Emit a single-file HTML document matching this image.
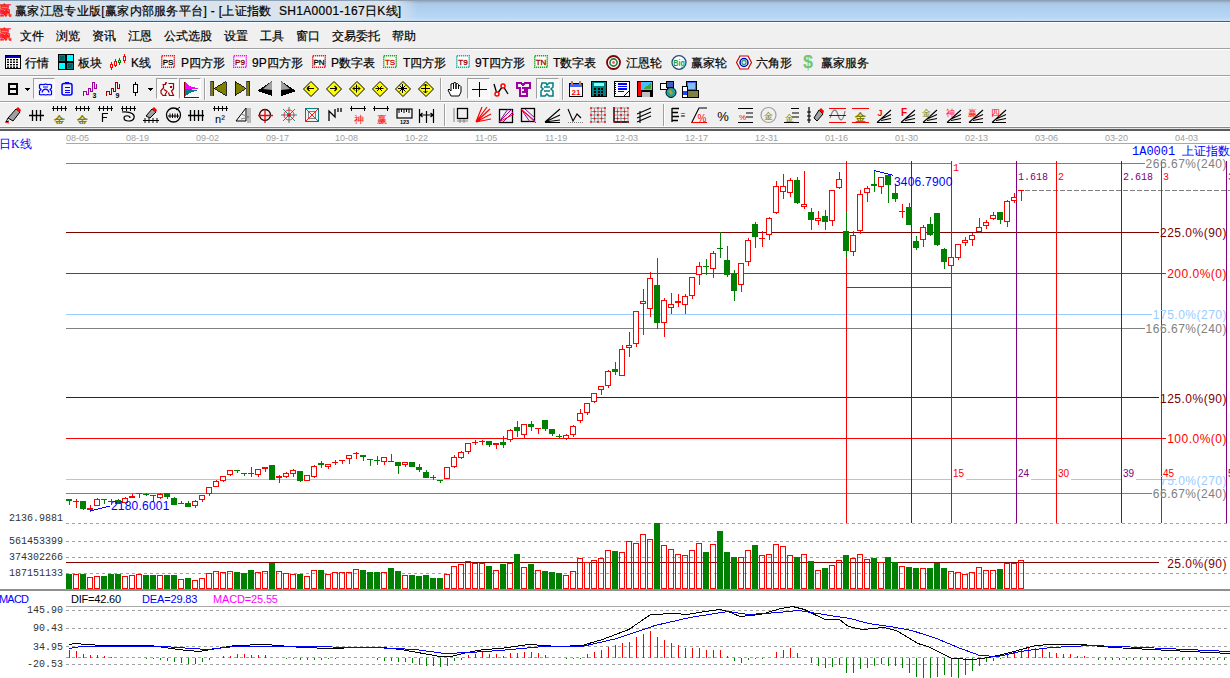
<!DOCTYPE html>
<html><head><meta charset="utf-8">
<style>
html,body{margin:0;padding:0;width:1230px;height:678px;overflow:hidden;background:#fff;font-family:"Liberation Sans",sans-serif;}
.abs{position:absolute;}
#title{left:0;top:0;width:1230px;height:21px;background:linear-gradient(to bottom,#8598ad 0px,#9fb6cf 2px,#abcaea 4px,#b0d1f1 10px,#b6d6f4 17px,#c4def6 20px);}
#titleglow{left:0;top:1px;width:418px;height:19px;background:linear-gradient(to right,rgba(220,228,235,0.97) 0,rgba(220,228,235,0.97) 94%,rgba(220,228,235,0) 100%);}
#titleline{left:0;top:21px;width:1230px;height:1px;background:#4e5c68;}
.ttl{font-size:12px;line-height:14px;color:#000;top:4px;white-space:nowrap;letter-spacing:0.32px;-webkit-text-stroke:0.2px #000;}
#menu{left:0;top:22px;width:1230px;height:26px;background:#f0f0f0;border-top:1px solid #fff;box-sizing:border-box;}
.mi{font-size:12px;line-height:14px;top:29px;color:#000;white-space:nowrap;-webkit-text-stroke:0.2px #000;}
.bar{left:0;width:1230px;background:#f0f0f0;}
.sep{background:#a0a0a0;height:1px;left:0;width:1230px;}
.sepw{background:#fff;height:1px;left:0;width:1230px;}
.tb{font-size:12px;color:#000;white-space:nowrap;-webkit-text-stroke:0.2px #000;}
.lbl{font-size:12px;letter-spacing:0.5px;white-space:nowrap;line-height:12px;}
.date{font-size:9px;color:#a0a0a0;top:132px;line-height:10px;}
.mono{font-family:"Liberation Mono",monospace;}
</style></head><body>
<div class="abs" id="title"></div>
<div class="abs" id="titleglow"></div>
<div class="abs" id="titleline"></div>
<div class="abs ttl" style="left:-2px;top:3px;color:#ff0000;font-size:14px;line-height:16px;font-family:'Liberation Serif',serif;-webkit-text-stroke:0.3px #f00">赢</div>
<div class="abs ttl" style="left:15px;">赢家江恩专业版[赢家内部服务平台] - [上证指数&nbsp; SH1A0001-167日K线]</div>

<div class="abs" id="menu"></div>
<div class="abs mi" style="left:-2px;top:27px;color:#ff0000;font-size:14px;line-height:16px;font-family:'Liberation Serif',serif;-webkit-text-stroke:0.3px #f00">赢</div>
<div class="abs mi" style="left:20px">文件</div>
<div class="abs mi" style="left:56px">浏览</div>
<div class="abs mi" style="left:92px">资讯</div>
<div class="abs mi" style="left:128px">江恩</div>
<div class="abs mi" style="left:164px">公式选股</div>
<div class="abs mi" style="left:224px">设置</div>
<div class="abs mi" style="left:260px">工具</div>
<div class="abs mi" style="left:296px">窗口</div>
<div class="abs mi" style="left:332px">交易委托</div>
<div class="abs mi" style="left:392px">帮助</div>

<div class="abs sep" style="top:48px"></div>
<div class="abs sepw" style="top:49px"></div>
<div class="abs bar" style="top:50px;height:25px"></div>
<div class="abs sep" style="top:75px"></div>
<div class="abs sepw" style="top:76px"></div>
<div class="abs bar" style="top:77px;height:24px"></div>
<div class="abs sep" style="top:101px"></div>
<div class="abs sepw" style="top:102px"></div>
<div class="abs bar" style="top:103px;height:24px"></div>
<div class="abs" style="left:0;top:126px;width:1230px;height:1px;background:#fafafa"></div>
<div class="abs" style="left:0;top:127px;width:1230px;height:1px;background:#858585"></div>
<div class="abs" style="left:0;top:128px;width:1230px;height:1px;background:#e4e4e4"></div>
<div class="abs" style="left:0;top:129px;width:1230px;height:2px;background:#5c5c5c"></div>

<svg class="abs" style="left:5px;top:55px" width="16" height="14" viewBox="0 0 16 14"><rect x="0.5" y="0.5" width="15" height="13" fill="#fff" stroke="#000"/><rect x="1" y="1" width="14" height="2" fill="#0000c0"/><rect x="2" y="4.0" width="2" height="1.4" fill="#000"/><rect x="5" y="4.0" width="2" height="1.4" fill="#000"/><rect x="8" y="4.0" width="2" height="1.4" fill="#000"/><rect x="11" y="4.0" width="2" height="1.4" fill="#000"/><rect x="2" y="6.5" width="2" height="1.4" fill="#000"/><rect x="5" y="6.5" width="2" height="1.4" fill="#000"/><rect x="8" y="6.5" width="2" height="1.4" fill="#000"/><rect x="11" y="6.5" width="2" height="1.4" fill="#000"/><rect x="2" y="9.0" width="2" height="1.4" fill="#000"/><rect x="5" y="9.0" width="2" height="1.4" fill="#000"/><rect x="8" y="9.0" width="2" height="1.4" fill="#000"/><rect x="11" y="9.0" width="2" height="1.4" fill="#000"/><rect x="2" y="11.5" width="2" height="1.4" fill="#000"/><rect x="5" y="11.5" width="2" height="1.4" fill="#000"/><rect x="8" y="11.5" width="2" height="1.4" fill="#000"/><rect x="11" y="11.5" width="2" height="1.4" fill="#000"/></svg>
<div class="abs tb" style="left:25px;top:55.5px;line-height:14px">行情</div>
<svg class="abs" style="left:58px;top:54px" width="16" height="16" viewBox="0 0 16 16"><rect x="0.5" y="0.5" width="7" height="7" fill="#008080" stroke="#000"/><rect x="8.5" y="0.5" width="7" height="7" fill="#00ffff" stroke="#000"/><rect x="0.5" y="8.5" width="7" height="7" fill="#00ffff" stroke="#000"/><rect x="8.5" y="8.5" width="7" height="7" fill="#008080" stroke="#000"/><rect x="2" y="2" width="4" height="4" fill="#006060"/><rect x="10" y="10" width="4" height="4" fill="#006060"/></svg>
<div class="abs tb" style="left:78px;top:55.5px;line-height:14px">板块</div>
<svg class="abs" style="left:110px;top:54px" width="17" height="16" viewBox="0 0 17 16"><g stroke-width="1"><line x1="1.5" y1="8" x2="1.5" y2="16" stroke="#f00"/><rect x="0.5" y="10.5" width="2" height="3" fill="#fff" stroke="#f00"/><line x1="5.5" y1="5" x2="5.5" y2="13" stroke="#f00"/><rect x="4.5" y="7.5" width="2" height="4" fill="#fff" stroke="#f00"/><line x1="9.5" y1="4" x2="9.5" y2="11" stroke="#080"/><rect x="8.5" y="6.5" width="2" height="2" fill="#fff" stroke="#080"/><line x1="14.5" y1="0" x2="14.5" y2="9" stroke="#f00"/><rect x="13.5" y="2.5" width="2" height="4" fill="#fff" stroke="#f00"/></g></svg>
<div class="abs tb" style="left:131px;top:55.5px;line-height:14px">K线</div>
<svg class="abs" style="left:161px;top:55px" width="14" height="13" viewBox="0 0 14 13"><rect x="0.75" y="0.75" width="12.5" height="11.5" fill="#fff" stroke="#ff0000" stroke-width="1.5" stroke-dasharray="1.2,0.8"/><text x="7" y="9.6" font-family="Liberation Sans" font-size="8" text-anchor="middle" fill="#000" stroke="#000" stroke-width="0.3">PS</text></svg>
<div class="abs tb" style="left:181px;top:55.5px;line-height:14px">P四方形</div>
<svg class="abs" style="left:233px;top:55px" width="14" height="13" viewBox="0 0 14 13"><rect x="0.75" y="0.75" width="12.5" height="11.5" fill="#fff" stroke="#ff00ff" stroke-width="1.5" stroke-dasharray="1.2,0.8"/><text x="7" y="9.6" font-family="Liberation Sans" font-size="8" text-anchor="middle" fill="#800000" stroke="#800000" stroke-width="0.3">P9</text></svg>
<div class="abs tb" style="left:252px;top:55.5px;line-height:14px">9P四方形</div>
<svg class="abs" style="left:312px;top:55px" width="14" height="13" viewBox="0 0 14 13"><rect x="0.75" y="0.75" width="12.5" height="11.5" fill="#fff" stroke="#ff0000" stroke-width="1.5" stroke-dasharray="1.2,0.8"/><text x="7" y="9.6" font-family="Liberation Sans" font-size="8" text-anchor="middle" fill="#000" stroke="#000" stroke-width="0.3">PN</text></svg>
<div class="abs tb" style="left:331px;top:55.5px;line-height:14px">P数字表</div>
<svg class="abs" style="left:383px;top:55px" width="14" height="13" viewBox="0 0 14 13"><rect x="0.75" y="0.75" width="12.5" height="11.5" fill="#fff" stroke="#00b000" stroke-width="1.5" stroke-dasharray="1.2,0.8"/><text x="7" y="9.6" font-family="Liberation Sans" font-size="8" text-anchor="middle" fill="#e00000" stroke="#e00000" stroke-width="0.3">TS</text></svg>
<div class="abs tb" style="left:403px;top:55.5px;line-height:14px">T四方形</div>
<svg class="abs" style="left:456px;top:55px" width="14" height="13" viewBox="0 0 14 13"><rect x="0.75" y="0.75" width="12.5" height="11.5" fill="#fff" stroke="#00b0b0" stroke-width="1.5" stroke-dasharray="1.2,0.8"/><text x="7" y="9.6" font-family="Liberation Sans" font-size="8" text-anchor="middle" fill="#a00000" stroke="#a00000" stroke-width="0.3">T9</text></svg>
<div class="abs tb" style="left:475px;top:55.5px;line-height:14px">9T四方形</div>
<svg class="abs" style="left:534px;top:55px" width="14" height="13" viewBox="0 0 14 13"><rect x="0.75" y="0.75" width="12.5" height="11.5" fill="#fff" stroke="#00b000" stroke-width="1.5" stroke-dasharray="1.2,0.8"/><text x="7" y="9.6" font-family="Liberation Sans" font-size="8" text-anchor="middle" fill="#a00000" stroke="#a00000" stroke-width="0.3">TN</text></svg>
<div class="abs tb" style="left:553px;top:55.5px;line-height:14px">T数字表</div>
<svg class="abs" style="left:606px;top:55px" width="15" height="15" viewBox="0 0 15 15"><circle cx="7.5" cy="7.5" r="6.5" fill="#fff" stroke="#800000" stroke-width="1.8"/><circle cx="7.5" cy="7.5" r="3.6" fill="none" stroke="#208040" stroke-width="1.6"/><circle cx="7.5" cy="7.5" r="1.4" fill="#f06060"/></svg>
<div class="abs tb" style="left:626px;top:55.5px;line-height:14px">江恩轮</div>
<svg class="abs" style="left:671px;top:55px" width="16" height="15" viewBox="0 0 16 15"><ellipse cx="8" cy="7.5" rx="7" ry="6.8" fill="#fff" stroke="#205080" stroke-width="1.3"/><text x="8" y="11.5" font-family="Liberation Sans" font-size="9" font-weight="bold" text-anchor="middle" fill="#20a040" transform="translate(8 0) scale(0.8 1) translate(-8 0)">Big</text></svg>
<div class="abs tb" style="left:691px;top:55.5px;line-height:14px">赢家轮</div>
<svg class="abs" style="left:736px;top:55px" width="16" height="15" viewBox="0 0 16 15"><polygon points="4,1 12,1 15.5,7.5 12,14 4,14 0.5,7.5" fill="#fff" stroke="#c00000" stroke-width="1.2"/><circle cx="8" cy="7.5" r="4" fill="none" stroke="#0000c0" stroke-width="1.5"/><circle cx="8" cy="7.5" r="2" fill="none" stroke="#20a080" stroke-width="1.3"/></svg>
<div class="abs tb" style="left:756px;top:55.5px;line-height:14px">六角形</div>
<div class="abs" style="left:803px;top:53px;font:bold 18px/18px 'Liberation Sans',sans-serif;color:#70c870">$</div>
<div class="abs tb" style="left:821px;top:55.5px;line-height:14px">赢家服务</div>
<svg class="abs" style="left:8px;top:83px" width="10" height="12" viewBox="0 0 10 12" shape-rendering="crispEdges"><rect x="0" y="0" width="2" height="12" fill="#000"/><rect x="8" y="0" width="2" height="12" fill="#000"/><rect x="0" y="0" width="10" height="2" fill="#000"/><rect x="0" y="5" width="10" height="1.6" fill="#000"/><rect x="0" y="10" width="10" height="2" fill="#000"/></svg>
<svg class="abs" style="left:24px;top:88px" width="6" height="3" viewBox="0 0 6 3" shape-rendering="crispEdges"><polygon points="0,0 6,0 3,3" fill="#000"/></svg>
<div class="abs" style="left:33px;top:78px;width:22px;height:21px;box-sizing:border-box;border-top:1px solid #a0a0a0;border-left:1px solid #a0a0a0;border-right:1px solid #fff;border-bottom:1px solid #fff;background:#f8f8f8"></div>
<svg class="abs" style="left:38px;top:83px" width="15" height="13" viewBox="0 0 15 13" shape-rendering="crispEdges"><path d="M1.5,2 C3,0.5 5,2.5 7.5,1 C10,2.5 12,0.5 13.5,2 V5 L12,6.5 L13.5,8 V11.5 C12,12.5 10,11 7.5,12 C5,11 3,12.5 1.5,11.5 V8 L3,6.5 L1.5,5 Z M4,9.5 C5,5 10,5 11,9.5 M5,4 H10" fill="none" stroke="#0000ff" stroke-width="1.2" shape-rendering="auto"/></svg>
<svg class="abs" style="left:61px;top:82px" width="12" height="14" viewBox="0 0 12 14" shape-rendering="crispEdges"><rect x="1" y="1.5" width="10" height="11.5" rx="2" fill="none" stroke="#0000ff" stroke-width="1.5" shape-rendering="auto"/><rect x="4" y="0" width="4" height="2" fill="#0000ff"/><path d="M3.5,5.5 H8.5 M3.5,8 H8.5 M3.5,10.5 H8.5" stroke="#0000ff" stroke-width="1"/></svg>
<svg class="abs" style="left:83px;top:82px" width="15" height="16" viewBox="0 0 15 16" shape-rendering="crispEdges"><path d="M0.5,13.6 V9.5 H3.5 V12.5 H5.5 V6.5 H7.5 V9.5 H9.5 V0.5 H11.5 V6.5 H13.5 V2.4" fill="none" stroke="#a000a0" stroke-width="1.1"/><text x="11.5" y="15.5" font-family="Liberation Sans" font-weight="bold" font-size="7" text-anchor="middle" fill="#000">3</text></svg>
<svg class="abs" style="left:106px;top:82px" width="15" height="16" viewBox="0 0 15 16" shape-rendering="crispEdges"><path d="M0.5,13.6 V9.5 H3.5 V12.5 H5.5 V6.5 H7.5 V9.5 H9.5 V0.5 H11.5 V6.5 H13.5 V2.4" fill="none" stroke="#a00000" stroke-width="1.1"/><text x="11.5" y="15.5" font-family="Liberation Sans" font-weight="bold" font-size="7" text-anchor="middle" fill="#000">9</text></svg>
<svg class="abs" style="left:133px;top:82px" width="6" height="14" viewBox="0 0 6 14" shape-rendering="crispEdges"><line x1="2.5" y1="0" x2="2.5" y2="14" stroke="#000"/><rect x="0.5" y="2.5" width="4" height="8" fill="#fff" stroke="#000" stroke-width="1.2"/></svg>
<svg class="abs" style="left:147px;top:88px" width="6" height="3" viewBox="0 0 6 3" shape-rendering="crispEdges"><polygon points="0,0 6,0 3,3" fill="#000"/></svg>
<div class="abs" style="left:156px;top:78px;width:22px;height:21px;box-sizing:border-box;border-top:1px solid #a0a0a0;border-left:1px solid #a0a0a0;border-right:1px solid #fff;border-bottom:1px solid #fff;background:#f8f8f8"></div>
<svg class="abs" style="left:160px;top:82px" width="15" height="15" viewBox="0 0 15 15" shape-rendering="crispEdges"><path d="M2.5,2.5 H5.5 V0.8 H7 M3.5,2.5 V6 L1,8.5 V11 L3,13.5 H6.5 M8.5,1.5 H13.5 V7 L11.5,9 L13.5,13.5 H9.5 L8.5,10.5 M4,7.5 L7,9.5 L5,13" fill="none" stroke="#a00000" stroke-width="1.2" shape-rendering="auto"/><rect x="10" y="4" width="2" height="2" fill="#a00000"/></svg>
<div class="abs" style="left:179px;top:78px;width:22px;height:21px;box-sizing:border-box;border-top:1px solid #a0a0a0;border-left:1px solid #a0a0a0;border-right:1px solid #fff;border-bottom:1px solid #fff;background:#f8f8f8"></div>
<svg class="abs" style="left:183px;top:82px" width="17" height="16" viewBox="0 0 17 16" shape-rendering="crispEdges"><polygon points="2,0 4,1 6,4 10,5 16,7 2,7" fill="#ff00ff"/><polygon points="2,7 15,8 10,10 6,11 4,13 2,14" fill="#008080"/><path d="M1.5,0 V15.5 H16" fill="none" stroke="#800000" stroke-width="1.3"/></svg>
<div class="abs" style="left:204px;top:78px;width:1px;height:22px;background:#a0a0a0;border-right:1px solid #fff"></div>
<svg class="abs" style="left:210px;top:81px" width="17" height="15" viewBox="0 0 17 15" shape-rendering="crispEdges"><rect x="0.5" y="0" width="3" height="15" fill="#808000" stroke="#000" stroke-width="0.6"/><polygon points="16,0.5 16,14.5 4,7.5" fill="#808000" stroke="#000" stroke-width="0.8"/></svg>
<svg class="abs" style="left:234px;top:81px" width="16" height="15" viewBox="0 0 16 15" shape-rendering="crispEdges"><polygon points="1,0.5 1,14.5 12,7.5" fill="#808000" stroke="#000" stroke-width="0.8"/><rect x="12.5" y="0" width="3" height="15" fill="#808000" stroke="#000" stroke-width="0.6"/></svg>
<svg class="abs" style="left:257px;top:81px" width="15" height="15" viewBox="0 0 15 15" shape-rendering="crispEdges"><polygon points="15,0 0,10 15,15" fill="#000"/><polygon points="15,0 6,8 15,9" fill="#a0a0a0" shape-rendering="auto"/></svg>
<svg class="abs" style="left:281px;top:81px" width="15" height="15" viewBox="0 0 15 15" shape-rendering="crispEdges"><polygon points="0,0 15,10 0,15" fill="#000"/><polygon points="0,0 9,8 0,9" fill="#a0a0a0" shape-rendering="auto"/></svg>
<svg class="abs" style="left:303px;top:81px" width="16" height="16" viewBox="0 0 16 16" shape-rendering="crispEdges"><polygon points="8,0.5 15.5,8 8,15.5 0.5,8" fill="#ffff00" stroke="#000" stroke-width="1" shape-rendering="auto"/><path d="M4,7.5 H11 M4,7.5 L6.5,5 M4,7.5 L6.5,10" stroke="#000" shape-rendering="auto" stroke-width="1.2" fill="none"/></svg>
<svg class="abs" style="left:326px;top:81px" width="16" height="16" viewBox="0 0 16 16" shape-rendering="crispEdges"><polygon points="8,0.5 15.5,8 8,15.5 0.5,8" fill="#ffff00" stroke="#000" stroke-width="1" shape-rendering="auto"/><path d="M4,7.5 H11 M11,7.5 L8.5,5 M11,7.5 L8.5,10" stroke="#000" shape-rendering="auto" stroke-width="1.2" fill="none"/></svg>
<svg class="abs" style="left:349px;top:81px" width="16" height="16" viewBox="0 0 16 16" shape-rendering="crispEdges"><polygon points="8,0.5 15.5,8 8,15.5 0.5,8" fill="#ffff00" stroke="#000" stroke-width="1" shape-rendering="auto"/><path d="M7.5,3.5 V11.5 M4,7.5 H11 M4,7.5 L6,5.5 M4,7.5 L6,9.5 M11,7.5 L9,5.5 M11,7.5 L9,9.5" stroke="#000" shape-rendering="auto" stroke-width="1" fill="none"/></svg>
<svg class="abs" style="left:372px;top:81px" width="16" height="16" viewBox="0 0 16 16" shape-rendering="crispEdges"><polygon points="8,0.5 15.5,8 8,15.5 0.5,8" fill="#ffff00" stroke="#000" stroke-width="1" shape-rendering="auto"/><path d="M3.5,7.5 H11.5 M5,5 L10,10 M10,5 L5,10" stroke="#000" shape-rendering="auto" stroke-width="1" fill="none"/></svg>
<svg class="abs" style="left:395px;top:81px" width="16" height="16" viewBox="0 0 16 16" shape-rendering="crispEdges"><polygon points="8,0.5 15.5,8 8,15.5 0.5,8" fill="#ffff00" stroke="#000" stroke-width="1" shape-rendering="auto"/><path d="M7.5,3 V12 M3,7.5 H12 M4.5,4.5 L10.5,10.5 M10.5,4.5 L4.5,10.5" stroke="#000" shape-rendering="auto" stroke-width="1" fill="none"/></svg>
<svg class="abs" style="left:418px;top:81px" width="16" height="16" viewBox="0 0 16 16" shape-rendering="crispEdges"><polygon points="8,0.5 15.5,8 8,15.5 0.5,8" fill="#ffff00" stroke="#000" stroke-width="1" shape-rendering="auto"/><path d="M7.5,3 V12 M3,7.5 H12 M5.5,5 L7.5,3 L9.5,5 M5.5,10 L7.5,12 L9.5,10" stroke="#000" shape-rendering="auto" stroke-width="1" fill="none"/></svg>
<div class="abs" style="left:440px;top:78px;width:1px;height:22px;background:#a0a0a0;border-right:1px solid #fff"></div>
<svg class="abs" style="left:447px;top:82px" width="15" height="15" viewBox="0 0 15 15" shape-rendering="crispEdges"><path d="M4,14 L1,8 L2,7 L4,9 V2 L5.5,1.5 L6.5,2 V7 V1 L8,0.5 L9,1 V7 V2 L10.5,1.5 L11.5,2.5 V7 V4 L13,3.5 L14,4.5 V10 L12,14 Z" fill="#fff" stroke="#000" stroke-width="1" shape-rendering="auto"/></svg>
<div class="abs" style="left:467px;top:78px;width:23px;height:21px;box-sizing:border-box;border-top:1px solid #a0a0a0;border-left:1px solid #a0a0a0;border-right:1px solid #fff;border-bottom:1px solid #fff;background:#f8f8f8"></div>
<svg class="abs" style="left:472px;top:82px" width="15" height="15" viewBox="0 0 15 15" shape-rendering="crispEdges"><path d="M7.5,0 V15 M0,7.5 H15" stroke="#000" stroke-width="1.2"/></svg>
<svg class="abs" style="left:493px;top:82px" width="16" height="15" viewBox="0 0 16 15" shape-rendering="crispEdges"><path d="M1,2 L4,12 L10,4 L15,12" stroke="#000" stroke-width="1.3" fill="none" shape-rendering="auto"/><circle cx="4" cy="12" r="2" fill="#fff" stroke="#f00" stroke-width="1.5" shape-rendering="auto"/><circle cx="10" cy="4" r="2" fill="#fff" stroke="#f00" stroke-width="1.5" shape-rendering="auto"/></svg>
<svg class="abs" style="left:516px;top:82px" width="15" height="15" viewBox="0 0 15 15" shape-rendering="crispEdges"><path d="M1,1 H5 L7,3 L9,1 H14 V6 H11 V14 H4 V6 H1 Z M6,6 H9 V10 H6" fill="none" stroke="#a000a0" stroke-width="1.5"/></svg>
<div class="abs" style="left:536px;top:78px;width:23px;height:21px;box-sizing:border-box;border-top:1px solid #a0a0a0;border-left:1px solid #a0a0a0;border-right:1px solid #fff;border-bottom:1px solid #fff;background:#f8f8f8"></div>
<svg class="abs" style="left:539px;top:82px" width="17" height="15" viewBox="0 0 17 15" shape-rendering="crispEdges"><path d="M3,1 H7 L8,3 L10,1 H14 V5 L12,7 L14,9 V14 H10 L8,12 L6,14 H2 V9 L4,7 L2,5 Z M5,5 H11 M5,9 H11" fill="none" stroke="#008080" stroke-width="1.5" shape-rendering="auto"/></svg>
<div class="abs" style="left:562px;top:78px;width:1px;height:22px;background:#a0a0a0;border-right:1px solid #fff"></div>
<svg class="abs" style="left:569px;top:81px" width="14" height="16" viewBox="0 0 14 16" shape-rendering="crispEdges"><rect x="0.5" y="2.5" width="13" height="13" fill="#fff" stroke="#000"/><rect x="1" y="3" width="12" height="3" fill="#4060ff"/><rect x="2" y="0" width="2" height="4" fill="#c08040"/><rect x="10" y="0" width="2" height="4" fill="#c08040"/><text x="7" y="14" font-family="Liberation Sans" font-size="8" font-weight="bold" text-anchor="middle" fill="#f00">21</text></svg>
<svg class="abs" style="left:591px;top:81px" width="16" height="16" viewBox="0 0 16 16" shape-rendering="crispEdges"><rect x="0.5" y="0.5" width="15" height="15" fill="#008080" stroke="#000"/><rect x="3" y="2" width="10" height="3" fill="#80ffff"/><rect x="3.0" y="7" width="2" height="2" fill="#000"/><rect x="6.5" y="7" width="2" height="2" fill="#000"/><rect x="10.0" y="7" width="2" height="2" fill="#000"/><rect x="3.0" y="10" width="2" height="2" fill="#000"/><rect x="6.5" y="10" width="2" height="2" fill="#000"/><rect x="10.0" y="10" width="2" height="2" fill="#000"/><rect x="3.0" y="13" width="2" height="2" fill="#000"/><rect x="6.5" y="13" width="2" height="2" fill="#000"/><rect x="10.0" y="13" width="2" height="2" fill="#000"/></svg>
<svg class="abs" style="left:614px;top:81px" width="16" height="16" viewBox="0 0 16 16" shape-rendering="crispEdges"><rect x="0.5" y="0.5" width="15" height="15" fill="#fff" stroke="#000"/><path d="M4,3 H13 M4,5.5 H13 M4,8 H13 M4,10.5 H10" stroke="#0000ff" stroke-width="1.2"/><path d="M1,2 V14" stroke="#000" stroke-dasharray="1,1"/><path d="M10,15 L15,10" stroke="#000"/></svg>
<svg class="abs" style="left:637px;top:81px" width="16" height="16" viewBox="0 0 16 16" shape-rendering="crispEdges"><rect x="0" y="0" width="16" height="16" fill="#000"/><rect x="1" y="1" width="3" height="14" fill="#f00"/><rect x="4" y="1" width="11" height="8" fill="#40c0ff"/><polygon points="6,8 14,2 14,8" fill="#40a040"/><rect x="5" y="11" width="8" height="5" fill="#c0c0c0"/></svg>
<svg class="abs" style="left:660px;top:81px" width="17" height="17" viewBox="0 0 17 17" shape-rendering="crispEdges"><rect x="0.5" y="2.5" width="7" height="6" fill="#fff" stroke="#000"/><rect x="6.5" y="0.5" width="7" height="6" fill="#4060c0" stroke="#000"/><circle cx="11" cy="11.5" r="5" fill="#20a0a0" stroke="#000" shape-rendering="auto"/><path d="M8,10 L11,9 L13,12 L11,14" fill="#c0a020" shape-rendering="auto"/></svg>
<svg class="abs" style="left:682px;top:81px" width="17" height="17" viewBox="0 0 17 17" shape-rendering="crispEdges"><rect x="4.5" y="0.5" width="10" height="9" fill="#4060ff" stroke="#000"/><rect x="6" y="2" width="7" height="6" fill="#80c0ff"/><rect x="2" y="9" width="14" height="7" fill="#808040" stroke="#000"/><rect x="0.5" y="5.5" width="5" height="11" fill="#fff" stroke="#000"/><rect x="1" y="10" width="4" height="4" fill="#2040ff"/></svg>
<svg class="abs" style="left:4px;top:106px" width="17" height="18" viewBox="0 0 17 18"><polygon points="4,12 12,3 16,6 9,15" fill="#a0a0a0" stroke="#000" stroke-width="1"/><polygon points="12,3 14,1 17,4 16,6" fill="#f00"/><polyline points="4,12 2,16 5,15" fill="none" stroke="#000"/><line x1="1" y1="16" x2="5" y2="17" stroke="#f00"/></svg>
<svg class="abs" style="left:29px;top:106px" width="17" height="18" viewBox="0 0 17 18"><path d="M0,9.5 H15 M3.5,4 V15 M7.5,4 V15 M11.5,4 V15" stroke="#000" stroke-width="1.3"/></svg>
<svg class="abs" style="left:51px;top:106px" width="17" height="18" viewBox="0 0 17 18"><path d="M1,2.5 H16" stroke="#000" stroke-width="1"/><path d="M2.5,0 V5" stroke="#000" stroke-width="1"/><path d="M6.5,0 V5" stroke="#000" stroke-width="1"/><path d="M10.5,0 V5" stroke="#000" stroke-width="1"/><path d="M14.5,0 V5" stroke="#000" stroke-width="1"/><text x="8.5" y="17.5" font-family="Liberation Sans" font-size="11" fill="#808000" font-weight="bold" text-anchor="middle">金</text></svg>
<svg class="abs" style="left:74px;top:106px" width="17" height="18" viewBox="0 0 17 18"><path d="M1,2.5 H16" stroke="#000" stroke-width="1"/><path d="M2.5,0 V5" stroke="#000" stroke-width="1"/><path d="M6.5,0 V5" stroke="#000" stroke-width="1"/><path d="M10.5,0 V5" stroke="#000" stroke-width="1"/><path d="M14.5,0 V5" stroke="#000" stroke-width="1"/><text x="8.5" y="17.5" font-family="Liberation Sans" font-size="11" fill="#808000" font-weight="bold" text-anchor="middle">金</text></svg>
<svg class="abs" style="left:97px;top:106px" width="17" height="18" viewBox="0 0 17 18"><path d="M1,2.5 H16" stroke="#000" stroke-width="1"/><path d="M2.5,0 V5" stroke="#000" stroke-width="1"/><path d="M6.5,0 V5" stroke="#000" stroke-width="1"/><path d="M10.5,0 V5" stroke="#000" stroke-width="1"/><path d="M14.5,0 V5" stroke="#000" stroke-width="1"/><path d="M5.5,7 V16 M5.5,7.5 H11 M5.5,11.5 H10" stroke="#000" stroke-width="1.2" fill="none"/></svg>
<svg class="abs" style="left:120px;top:106px" width="17" height="18" viewBox="0 0 17 18"><path d="M1,2.5 H16" stroke="#000" stroke-width="1"/><path d="M2.5,0 V5" stroke="#000" stroke-width="1"/><path d="M6.5,0 V5" stroke="#000" stroke-width="1"/><path d="M10.5,0 V5" stroke="#000" stroke-width="1"/><path d="M14.5,0 V5" stroke="#000" stroke-width="1"/><path d="M2,6 C12,5 15,9 14,12 C13,16 4,16 4,12 C4,9 10,9 10,12" stroke="#000" stroke-width="1.2" fill="none"/></svg>
<svg class="abs" style="left:143px;top:106px" width="17" height="18" viewBox="0 0 17 18"><polygon points="3,10 9,3 13,6 7,12" fill="#a0a0a0" stroke="#000"/><polygon points="9,3 11,1 14,4 13,6" fill="#f00"/><path d="M0,14.5 H16 M2,12 V17 M6,12 V17 M10,12 V17 M14,12 V17" stroke="#000" stroke-width="1"/></svg>
<svg class="abs" style="left:165px;top:106px" width="17" height="18" viewBox="0 0 17 18"><circle cx="8.5" cy="9" r="7" fill="none" stroke="#000" stroke-width="1.3"/><path d="M3,10 H14 M5,7.5 V12 M7.5,7.5 V12 M10,7.5 V12 M12.5,7.5 V12 M11,4 L15,1" stroke="#000" stroke-width="1"/></svg>
<svg class="abs" style="left:188px;top:106px" width="17" height="18" viewBox="0 0 17 18"><path d="M0,9.5 H16 M2.5,4 V15 M6.5,4 V15 M10.5,4 V15 M14.5,4 V15" stroke="#000" stroke-width="1.3"/></svg>
<svg class="abs" style="left:212px;top:106px" width="17" height="18" viewBox="0 0 17 18"><path d="M1,2.5 H16" stroke="#000" stroke-width="1"/><path d="M2.5,0 V5" stroke="#000" stroke-width="1"/><path d="M6.5,0 V5" stroke="#000" stroke-width="1"/><path d="M10.5,0 V5" stroke="#000" stroke-width="1"/><path d="M14.5,0 V5" stroke="#000" stroke-width="1"/><text x="8" y="17" font-family="Liberation Sans" font-size="11" fill="#000" text-anchor="middle">n²</text></svg>
<svg class="abs" style="left:235px;top:106px" width="17" height="18" viewBox="0 0 17 18"><polygon points="1,15 11,2 11,15" fill="none" stroke="#000" stroke-width="1"/><path d="M6,8 L14,11 L6,13 M13,2 V17 M15,2 V17" stroke="#808080" fill="none"/></svg>
<svg class="abs" style="left:257px;top:106px" width="17" height="18" viewBox="0 0 17 18"><circle cx="8" cy="9" r="5.5" fill="none" stroke="#000" stroke-width="1.3"/><path d="M1,9.5 H16 M8,3 V17" stroke="#f00" stroke-width="1.3"/></svg>
<svg class="abs" style="left:281px;top:106px" width="17" height="18" viewBox="0 0 17 18"><path d="M8,1 V17 M0,9 H16 M2,3 L14,15 M14,3 L2,15" stroke="#008080" stroke-width="0.9"/><circle cx="8" cy="9" r="5" fill="none" stroke="#f00" stroke-width="0.8"/><circle cx="8" cy="9" r="1.8" fill="#f00"/></svg>
<svg class="abs" style="left:304px;top:106px" width="17" height="18" viewBox="0 0 17 18"><rect x="1.5" y="2.5" width="13" height="13" fill="none" stroke="#008080"/><rect x="4.5" y="5.5" width="7" height="7" fill="none" stroke="#808080"/><path d="M1.5,2.5 L14.5,15.5 M14.5,2.5 L1.5,15.5" stroke="#f00" stroke-width="0.9"/></svg>
<svg class="abs" style="left:327px;top:106px" width="17" height="18" viewBox="0 0 17 18"><path d="M2,15 V5 L8,11 V3 M11,2 V6 M14,2 V6" stroke="#000" stroke-width="1.3" fill="none"/></svg>
<svg class="abs" style="left:350px;top:106px" width="17" height="18" viewBox="0 0 17 18"><path d="M0,2.5 H16 M1.5,0 V5 M14.5,0 V5" stroke="#000"/><text x="8.5" y="17" font-family="Liberation Sans" font-size="10" fill="#ff0000" text-anchor="middle">神</text></svg>
<svg class="abs" style="left:373px;top:106px" width="17" height="18" viewBox="0 0 17 18"><path d="M0,2.5 H16 M1.5,0 V5 M14.5,0 V5" stroke="#000"/><text x="8.5" y="17" font-family="Liberation Sans" font-size="10" fill="#ff0000" text-anchor="middle">赢</text></svg>
<svg class="abs" style="left:396px;top:106px" width="17" height="18" viewBox="0 0 17 18"><rect x="1" y="3" width="15" height="9" fill="none" stroke="#000" stroke-width="1.2"/><path d="M3,3 V7 M5.5,3 V6 M8,3 V7 M10.5,3 V6 M13,3 V7" stroke="#000"/><text x="8.5" y="17.5" font-family="Liberation Sans" font-size="5.5" fill="#000" font-weight="bold" text-anchor="middle">123</text></svg>
<svg class="abs" style="left:418px;top:106px" width="17" height="18" viewBox="0 0 17 18"><path d="M1.5,3 V17 M15.5,3 V17 M8.5,5 V17 M2,9 H15 M2,9 L4.5,7 M2,9 L4.5,11 M15,9 L12.5,7 M15,9 L12.5,11" stroke="#000" stroke-width="1.2" fill="none"/></svg>
<div class="abs" style="left:444px;top:104px;width:1px;height:22px;background:#a0a0a0;border-right:1px solid #fff"></div>
<svg class="abs" style="left:452px;top:106px" width="17" height="18" viewBox="0 0 17 18"><rect x="5.5" y="2.5" width="10" height="10" fill="none" stroke="#000" stroke-width="1.3"/><path d="M2,2 V16 M5,15 H16 M8,13 V17 M12,13 V17" stroke="#808080" fill="none"/></svg>
<svg class="abs" style="left:475px;top:106px" width="17" height="18" viewBox="0 0 17 18"><path d="M1,16 L15,3 M1,16 L12,1 M1,16 L7,1 M1,16 L16,8 M1,16 L16,13" stroke="#f00" stroke-width="1.2" fill="none"/></svg>
<svg class="abs" style="left:498px;top:106px" width="17" height="18" viewBox="0 0 17 18"><rect x="1.5" y="3.5" width="13" height="13" fill="none" stroke="#000" stroke-width="1.3"/><path d="M1,16 L14,3 M1,16 L10,3 M5,16 L15,6" stroke="#a000a0" fill="none"/><path d="M1,16 L16,8" stroke="#f00"/></svg>
<svg class="abs" style="left:520px;top:106px" width="17" height="18" viewBox="0 0 17 18"><rect x="1.5" y="2.5" width="13" height="13" fill="none" stroke="#000" stroke-width="1.3"/><path d="M1,3 L15,15 M1,3 L10,16 M5,3 L15,12" stroke="#a000a0" fill="none"/><path d="M1,3 L16,17" stroke="#f00"/></svg>
<svg class="abs" style="left:544px;top:106px" width="17" height="18" viewBox="0 0 17 18"><path d="M1,16 L16,3 M1,16 L16,9 M1,16 L16,14 M1,16.5 H16" stroke="#000" stroke-width="1.1" fill="none"/></svg>
<svg class="abs" style="left:567px;top:106px" width="17" height="18" viewBox="0 0 17 18"><path d="M1,3 L6,15 L10,8 L14,12" stroke="#000" stroke-width="1.1" fill="none"/><path d="M1,16.5 H16" stroke="#808080" stroke-dasharray="1,1"/></svg>
<svg class="abs" style="left:590px;top:106px" width="17" height="18" viewBox="0 0 17 18"><path d="M1.0,2 V16 M1,2.0 H15" stroke="#808080" stroke-width="0.8"/><path d="M4.5,2 V16 M1,5.5 H15" stroke="#808080" stroke-width="0.8"/><path d="M8.0,2 V16 M1,9.0 H15" stroke="#808080" stroke-width="0.8"/><path d="M11.5,2 V16 M1,12.5 H15" stroke="#808080" stroke-width="0.8"/><path d="M15.0,2 V16 M1,16.0 H15" stroke="#808080" stroke-width="0.8"/><circle cx="1.0" cy="2.0" r="0.9" fill="#f00"/><circle cx="1.0" cy="9.0" r="0.9" fill="#f00"/><circle cx="1.0" cy="16.0" r="0.9" fill="#f00"/><circle cx="4.5" cy="5.5" r="0.9" fill="#f00"/><circle cx="4.5" cy="12.5" r="0.9" fill="#f00"/><circle cx="8.0" cy="2.0" r="0.9" fill="#f00"/><circle cx="8.0" cy="9.0" r="0.9" fill="#f00"/><circle cx="8.0" cy="16.0" r="0.9" fill="#f00"/><circle cx="11.5" cy="5.5" r="0.9" fill="#f00"/><circle cx="11.5" cy="12.5" r="0.9" fill="#f00"/><circle cx="15.0" cy="2.0" r="0.9" fill="#f00"/><circle cx="15.0" cy="9.0" r="0.9" fill="#f00"/><circle cx="15.0" cy="16.0" r="0.9" fill="#f00"/></svg>
<svg class="abs" style="left:613px;top:106px" width="17" height="18" viewBox="0 0 17 18"><path d="M1.0,2 V16 M1,2.0 H15" stroke="#808080" stroke-width="0.8"/><path d="M4.5,2 V16 M1,5.5 H15" stroke="#808080" stroke-width="0.8"/><path d="M8.0,2 V16 M1,9.0 H15" stroke="#808080" stroke-width="0.8"/><path d="M11.5,2 V16 M1,12.5 H15" stroke="#808080" stroke-width="0.8"/><path d="M15.0,2 V16 M1,16.0 H15" stroke="#808080" stroke-width="0.8"/><path d="M1,16 V1 M1,16 H16" stroke="#000" stroke-width="1.3"/><circle cx="1.0" cy="2.0" r="0.9" fill="#f00"/><circle cx="1.0" cy="9.0" r="0.9" fill="#f00"/><circle cx="1.0" cy="16.0" r="0.9" fill="#f00"/><circle cx="4.5" cy="5.5" r="0.9" fill="#f00"/><circle cx="4.5" cy="12.5" r="0.9" fill="#f00"/><circle cx="8.0" cy="2.0" r="0.9" fill="#f00"/><circle cx="8.0" cy="9.0" r="0.9" fill="#f00"/><circle cx="8.0" cy="16.0" r="0.9" fill="#f00"/><circle cx="11.5" cy="5.5" r="0.9" fill="#f00"/><circle cx="11.5" cy="12.5" r="0.9" fill="#f00"/><circle cx="15.0" cy="2.0" r="0.9" fill="#f00"/><circle cx="15.0" cy="9.0" r="0.9" fill="#f00"/><circle cx="15.0" cy="16.0" r="0.9" fill="#f00"/></svg>
<svg class="abs" style="left:636px;top:106px" width="17" height="18" viewBox="0 0 17 18"><path d="M1,8 L15,2 M1,12 L15,6 M1,16 L15,10 M4,5 V17" stroke="#000" stroke-width="1.1" fill="none"/></svg>
<div class="abs" style="left:663px;top:104px;width:1px;height:22px;background:#a0a0a0;border-right:1px solid #fff"></div>
<svg class="abs" style="left:670px;top:106px" width="17" height="18" viewBox="0 0 17 18"><path d="M2,2 V16 M2,2.5 H9 M2,6.5 H8 M2,10.5 H9 M2,14.5 H8" stroke="#000" stroke-width="1.3" fill="none"/><text x="13" y="12" font-family="Liberation Sans" font-size="8" fill="#000" text-anchor="middle">≡</text></svg>
<svg class="abs" style="left:691px;top:106px" width="17" height="18" viewBox="0 0 17 18"><path d="M1,16 L8,2 H16" stroke="#000" stroke-width="1.1" fill="none"/><path d="M0,16.5 H16" stroke="#f00"/><text x="11" y="16" font-family="Liberation Sans" font-size="10" fill="#ff0000" text-anchor="middle">%</text></svg>
<svg class="abs" style="left:715px;top:106px" width="17" height="18" viewBox="0 0 17 18"><text x="8" y="14.5" font-family="Liberation Sans" font-size="13" fill="#000" text-anchor="middle">%</text></svg>
<svg class="abs" style="left:737px;top:106px" width="17" height="18" viewBox="0 0 17 18"><path d="M1,2.5 H16 M9,7 H16 M9,11 H16 M1,16.5 H16" stroke="#000" stroke-width="1.1"/><text x="5.5" y="14" font-family="Liberation Sans" font-size="8" fill="#ff0000" text-anchor="middle">%</text></svg>
<svg class="abs" style="left:760px;top:106px" width="17" height="18" viewBox="0 0 17 18"><circle cx="8.5" cy="9" r="7.5" fill="#f0f0f0" stroke="#a0a0a0" stroke-width="1.2"/><text x="8.5" y="13" font-family="Liberation Sans" font-size="9" fill="#808000" text-anchor="middle">金</text></svg>
<svg class="abs" style="left:783px;top:106px" width="17" height="18" viewBox="0 0 17 18"><path d="M8,2.5 H16 M9,7 H16 M9,11 H16 M1,16.5 H16" stroke="#000" stroke-width="1.1"/><text x="6" y="15" font-family="Liberation Sans" font-size="9" fill="#808000" text-anchor="middle">金</text></svg>
<svg class="abs" style="left:807px;top:106px" width="17" height="18" viewBox="0 0 17 18"><path d="M2,1 V17 M0,6 H4 M0,10 H4 M0,14 H4" stroke="#000" stroke-width="1.2"/><polygon points="7,12 12,4 16,8 10,15" fill="#a0a0a0" stroke="#000"/><polygon points="12,4 14,2 17,5 16,8" fill="#f00"/></svg>
<svg class="abs" style="left:829px;top:106px" width="17" height="18" viewBox="0 0 17 18"><path d="M0,2.5 H17 M0,16.5 H17" stroke="#f00"/><path d="M1,12 C4,2 7,2 9,9 C11,16 14,16 16,5" stroke="#808080" stroke-width="1.2" fill="none"/><path d="M0,9.5 H17" stroke="#000" stroke-width="0.8"/></svg>
<svg class="abs" style="left:852px;top:106px" width="17" height="18" viewBox="0 0 17 18"><path d="M0,2.5 H17 M0,16.5 H17" stroke="#f00" stroke-width="1.2"/><text x="8.5" y="14.5" font-family="Liberation Sans" font-size="11" fill="#808000" font-weight="bold" text-anchor="middle">金</text></svg>
<svg class="abs" style="left:875px;top:106px" width="17" height="18" viewBox="0 0 17 18"><path d="M2,16.5 L16,4 M2,16.5 H16 M5,13.5 L16,8.5 M6,14.5 L16,12.5" stroke="#000" stroke-width="1.1" fill="none"/><text x="5" y="9.5" font-family="Liberation Sans" font-size="9" fill="#ff0000" font-weight="bold" text-anchor="middle">J</text></svg>
<svg class="abs" style="left:899px;top:106px" width="17" height="18" viewBox="0 0 17 18"><path d="M2,16.5 L16,4 M2,16.5 H16 M5,13.5 L16,8.5 M6,14.5 L16,12.5" stroke="#000" stroke-width="1.1" fill="none"/><text x="5" y="9.5" font-family="Liberation Sans" font-size="10" fill="#ff0000" font-weight="bold" text-anchor="middle">F</text></svg>
<svg class="abs" style="left:921px;top:106px" width="17" height="18" viewBox="0 0 17 18"><path d="M2,16.5 L16,4 M2,16.5 H16 M5,13.5 L16,8.5 M6,14.5 L16,12.5" stroke="#000" stroke-width="1.1" fill="none"/><text x="5" y="9.5" font-family="Liberation Sans" font-size="9" fill="#808000" text-anchor="middle">金</text></svg>
<svg class="abs" style="left:945px;top:106px" width="17" height="18" viewBox="0 0 17 18"><path d="M2,16.5 L16,4 M2,16.5 H16 M5,13.5 L16,8.5 M6,14.5 L16,12.5" stroke="#000" stroke-width="1.1" fill="none"/><text x="5" y="9.5" font-family="Liberation Sans" font-size="9" fill="#ff0000" text-anchor="middle">神</text></svg>
<svg class="abs" style="left:967px;top:106px" width="17" height="18" viewBox="0 0 17 18"><path d="M2,16.5 L16,4 M2,16.5 H16 M5,13.5 L16,8.5 M6,14.5 L16,12.5" stroke="#000" stroke-width="1.1" fill="none"/><text x="5" y="9.5" font-family="Liberation Sans" font-size="9" fill="#ff0000" text-anchor="middle">赢</text></svg>
<svg class="abs" style="left:990px;top:106px" width="17" height="18" viewBox="0 0 17 18"><path d="M2,16.5 L16,4 M2,16.5 H16 M5,13.5 L16,8.5 M6,14.5 L16,12.5" stroke="#000" stroke-width="1.1" fill="none"/><text x="5" y="9.5" font-family="Liberation Sans" font-size="9" fill="#ff0000" text-anchor="middle">四</text></svg>

<svg class="abs" style="left:0;top:0" width="1230" height="678" shape-rendering="crispEdges">
<line x1="66" y1="143.5" x2="1230" y2="143.5" stroke="#a8a8a8" stroke-width="1"/>
<line x1="66" y1="163.5" x2="952" y2="163.5" stroke="#808080" stroke-width="1"/>
<line x1="959" y1="163.5" x2="1145" y2="163.5" stroke="#808080" stroke-width="1"/>
<line x1="1025" y1="190.5" x2="1230" y2="190.5" stroke="#808080" stroke-width="1" stroke-dasharray="5,2"/>
<line x1="66" y1="232.5" x2="1159" y2="232.5" stroke="#800000" stroke-width="1"/>
<line x1="66" y1="273.5" x2="1166" y2="273.5" stroke="#ff0000" stroke-width="1"/>
<line x1="846" y1="287.5" x2="951" y2="287.5" stroke="#ff0000" stroke-width="1"/>
<line x1="66" y1="314.5" x2="1152" y2="314.5" stroke="#99ccff" stroke-width="1"/>
<line x1="66" y1="328.5" x2="1145" y2="328.5" stroke="#808080" stroke-width="1"/>
<line x1="66" y1="397.5" x2="1159" y2="397.5" stroke="#800000" stroke-width="1"/>
<line x1="66" y1="438.5" x2="1166" y2="438.5" stroke="#ff0000" stroke-width="1"/>
<line x1="66" y1="479.5" x2="952" y2="479.5" stroke="#99ccff" stroke-width="1"/>
<line x1="966" y1="479.5" x2="1017" y2="479.5" stroke="#99ccff" stroke-width="1"/>
<line x1="1031" y1="479.5" x2="1057" y2="479.5" stroke="#99ccff" stroke-width="1"/>
<line x1="1071" y1="479.5" x2="1122" y2="479.5" stroke="#99ccff" stroke-width="1"/>
<line x1="1136" y1="479.5" x2="1162" y2="479.5" stroke="#99ccff" stroke-width="1"/>
<line x1="1176" y1="479.5" x2="1160" y2="479.5" stroke="#99ccff" stroke-width="1"/>
<line x1="66" y1="493.5" x2="1152" y2="493.5" stroke="#808080" stroke-width="1"/>
<line x1="66" y1="523.5" x2="1230" y2="523.5" stroke="#a0a0a0" stroke-width="1" stroke-dasharray="3,3"/>
<line x1="66" y1="541.5" x2="1230" y2="541.5" stroke="#a0a0a0" stroke-width="1" stroke-dasharray="3,3"/>
<line x1="66" y1="557.5" x2="1230" y2="557.5" stroke="#a0a0a0" stroke-width="1" stroke-dasharray="3,3"/>
<line x1="66" y1="573.5" x2="1230" y2="573.5" stroke="#a0a0a0" stroke-width="1" stroke-dasharray="3,3"/>
<line x1="66" y1="562.5" x2="1159" y2="562.5" stroke="#800000" stroke-width="1"/>
<line x1="66" y1="606.5" x2="1230" y2="606.5" stroke="#a8a8a8" stroke-width="1"/>
<line x1="66" y1="610.5" x2="1230" y2="610.5" stroke="#a0a0a0" stroke-width="1" stroke-dasharray="3,3"/>
<line x1="66" y1="628.5" x2="1230" y2="628.5" stroke="#a0a0a0" stroke-width="1" stroke-dasharray="3,3"/>
<line x1="66" y1="646.5" x2="1230" y2="646.5" stroke="#a0a0a0" stroke-width="1" stroke-dasharray="3,3"/>
<line x1="66" y1="657.5" x2="1230" y2="657.5" stroke="#a0a0a0" stroke-width="1" stroke-dasharray="3,3"/>
<line x1="66" y1="664.5" x2="1230" y2="664.5" stroke="#a0a0a0" stroke-width="1" stroke-dasharray="3,3"/>
<line x1="846.5" y1="161" x2="846.5" y2="523" stroke="#ff0000" stroke-width="1"/>
<line x1="911.5" y1="161" x2="911.5" y2="523" stroke="#800080" stroke-width="1"/>
<line x1="951.5" y1="161" x2="951.5" y2="523" stroke="#ff0000" stroke-width="1"/>
<line x1="1016.5" y1="161" x2="1016.5" y2="523" stroke="#800080" stroke-width="1"/>
<line x1="1056.5" y1="161" x2="1056.5" y2="523" stroke="#ff0000" stroke-width="1"/>
<line x1="1121.5" y1="161" x2="1121.5" y2="523" stroke="#800080" stroke-width="1"/>
<line x1="1161.5" y1="161" x2="1161.5" y2="523" stroke="#ff0000" stroke-width="1"/>
<line x1="1226.5" y1="161" x2="1226.5" y2="523" stroke="#800080" stroke-width="1"/>
<rect x="69" y="499" width="1" height="6" fill="#008000"/>
<rect x="66" y="499" width="6" height="2" fill="#008000"/>
<rect x="76" y="499" width="1" height="9" fill="#ff0000"/>
<rect x="73" y="501" width="6" height="1" fill="#ff0000"/>
<rect x="83" y="501" width="1" height="9" fill="#008000"/>
<rect x="80" y="501" width="6" height="8" fill="#008000"/>
<rect x="90" y="505" width="1" height="7" fill="#ff0000"/>
<rect x="87" y="508" width="6" height="2" fill="#ff0000"/>
<rect x="97" y="498" width="1" height="8" fill="#ff0000"/>
<rect x="94.5" y="499.5" width="5" height="6" fill="#fff" stroke="#ff0000" stroke-width="1"/>
<rect x="104" y="499" width="1" height="5" fill="#008000"/>
<rect x="101" y="499" width="6" height="1" fill="#008000"/>
<rect x="111" y="499" width="1" height="6" fill="#008000"/>
<rect x="108" y="501" width="6" height="1" fill="#008000"/>
<rect x="118" y="499" width="1" height="5" fill="#008000"/>
<rect x="115" y="500" width="6" height="4" fill="#008000"/>
<rect x="125" y="497" width="1" height="7" fill="#ff0000"/>
<rect x="122.5" y="498.5" width="5" height="4" fill="#fff" stroke="#ff0000" stroke-width="1"/>
<rect x="132" y="494" width="1" height="4" fill="#ff0000"/>
<rect x="129" y="496" width="6" height="2" fill="#ff0000"/>
<rect x="139" y="493" width="1" height="5" fill="#ff0000"/>
<rect x="136" y="493" width="6" height="1" fill="#ff0000"/>
<rect x="146" y="493" width="1" height="3" fill="#008000"/>
<rect x="143" y="494" width="6" height="1" fill="#008000"/>
<rect x="153" y="495" width="1" height="7" fill="#008000"/>
<rect x="150" y="495" width="6" height="1" fill="#008000"/>
<rect x="160" y="493" width="1" height="6" fill="#ff0000"/>
<rect x="157.5" y="494.5" width="5" height="3" fill="#fff" stroke="#ff0000" stroke-width="1"/>
<rect x="167" y="493" width="1" height="6" fill="#008000"/>
<rect x="164" y="493" width="6" height="4" fill="#008000"/>
<rect x="174" y="497" width="1" height="8" fill="#008000"/>
<rect x="171" y="498" width="6" height="7" fill="#008000"/>
<rect x="181" y="501" width="1" height="3" fill="#ff0000"/>
<rect x="178" y="503" width="6" height="1" fill="#ff0000"/>
<rect x="188" y="501" width="1" height="6" fill="#008000"/>
<rect x="185" y="503" width="6" height="4" fill="#008000"/>
<rect x="195" y="500" width="1" height="8" fill="#ff0000"/>
<rect x="192.5" y="501.5" width="5" height="4" fill="#fff" stroke="#ff0000" stroke-width="1"/>
<rect x="202" y="495" width="1" height="7" fill="#ff0000"/>
<rect x="199.5" y="495.5" width="5" height="4" fill="#fff" stroke="#ff0000" stroke-width="1"/>
<rect x="209" y="487" width="1" height="9" fill="#ff0000"/>
<rect x="206.5" y="487.5" width="5" height="6" fill="#fff" stroke="#ff0000" stroke-width="1"/>
<rect x="216" y="480" width="1" height="7" fill="#ff0000"/>
<rect x="213.5" y="481.5" width="5" height="5" fill="#fff" stroke="#ff0000" stroke-width="1"/>
<rect x="223" y="476" width="1" height="6" fill="#ff0000"/>
<rect x="220.5" y="476.5" width="5" height="4" fill="#fff" stroke="#ff0000" stroke-width="1"/>
<rect x="230" y="470" width="1" height="6" fill="#ff0000"/>
<rect x="227.5" y="470.5" width="5" height="4" fill="#fff" stroke="#ff0000" stroke-width="1"/>
<rect x="237" y="470" width="1" height="3" fill="#008000"/>
<rect x="234" y="470" width="6" height="1" fill="#008000"/>
<rect x="244" y="473" width="1" height="3" fill="#008000"/>
<rect x="241" y="473" width="6" height="1" fill="#008000"/>
<rect x="251" y="467" width="1" height="10" fill="#008000"/>
<rect x="248" y="473" width="6" height="1" fill="#008000"/>
<rect x="258" y="469" width="1" height="8" fill="#ff0000"/>
<rect x="255.5" y="469.5" width="5" height="5" fill="#fff" stroke="#ff0000" stroke-width="1"/>
<rect x="265" y="467" width="1" height="5" fill="#ff0000"/>
<rect x="262" y="467" width="6" height="2" fill="#ff0000"/>
<rect x="272" y="465" width="1" height="15" fill="#008000"/>
<rect x="269" y="465" width="6" height="15" fill="#008000"/>
<rect x="279" y="475" width="1" height="8" fill="#ff0000"/>
<rect x="276" y="476" width="6" height="2" fill="#ff0000"/>
<rect x="286" y="472" width="1" height="6" fill="#ff0000"/>
<rect x="283.5" y="473.5" width="5" height="3" fill="#fff" stroke="#ff0000" stroke-width="1"/>
<rect x="293" y="469" width="1" height="8" fill="#ff0000"/>
<rect x="290.5" y="470.5" width="5" height="3" fill="#fff" stroke="#ff0000" stroke-width="1"/>
<rect x="300" y="471" width="1" height="11" fill="#008000"/>
<rect x="297" y="471" width="6" height="10" fill="#008000"/>
<rect x="307" y="475" width="1" height="6" fill="#ff0000"/>
<rect x="304.5" y="475.5" width="5" height="5" fill="#fff" stroke="#ff0000" stroke-width="1"/>
<rect x="314" y="465" width="1" height="13" fill="#ff0000"/>
<rect x="311.5" y="466.5" width="5" height="10" fill="#fff" stroke="#ff0000" stroke-width="1"/>
<rect x="321" y="461" width="1" height="7" fill="#008000"/>
<rect x="318" y="463" width="6" height="2" fill="#008000"/>
<rect x="328" y="464" width="1" height="5" fill="#ff0000"/>
<rect x="325.5" y="464.5" width="5" height="2" fill="#fff" stroke="#ff0000" stroke-width="1"/>
<rect x="335" y="460" width="1" height="5" fill="#ff0000"/>
<rect x="332" y="462" width="6" height="1" fill="#ff0000"/>
<rect x="342" y="460" width="1" height="4" fill="#ff0000"/>
<rect x="339" y="460" width="6" height="1" fill="#ff0000"/>
<rect x="349" y="455" width="1" height="9" fill="#ff0000"/>
<rect x="346.5" y="455.5" width="5" height="3" fill="#fff" stroke="#ff0000" stroke-width="1"/>
<rect x="356" y="452" width="1" height="7" fill="#ff0000"/>
<rect x="353" y="453" width="6" height="1" fill="#ff0000"/>
<rect x="363" y="455" width="1" height="6" fill="#008000"/>
<rect x="360" y="455" width="6" height="2" fill="#008000"/>
<rect x="370" y="459" width="1" height="7" fill="#008000"/>
<rect x="367" y="459" width="6" height="1" fill="#008000"/>
<rect x="377" y="456" width="1" height="9" fill="#008000"/>
<rect x="374" y="460" width="6" height="1" fill="#008000"/>
<rect x="384" y="457" width="1" height="8" fill="#ff0000"/>
<rect x="381.5" y="457.5" width="5" height="4" fill="#fff" stroke="#ff0000" stroke-width="1"/>
<rect x="391" y="454" width="1" height="8" fill="#008000"/>
<rect x="388" y="461" width="6" height="1" fill="#008000"/>
<rect x="398" y="462" width="1" height="12" fill="#008000"/>
<rect x="395" y="462" width="6" height="4" fill="#008000"/>
<rect x="405" y="462" width="1" height="5" fill="#ff0000"/>
<rect x="402.5" y="462.5" width="5" height="2" fill="#fff" stroke="#ff0000" stroke-width="1"/>
<rect x="412" y="462" width="1" height="5" fill="#008000"/>
<rect x="409" y="462" width="6" height="5" fill="#008000"/>
<rect x="419" y="464" width="1" height="8" fill="#008000"/>
<rect x="416" y="467" width="6" height="3" fill="#008000"/>
<rect x="426" y="470" width="1" height="8" fill="#008000"/>
<rect x="423" y="472" width="6" height="6" fill="#008000"/>
<rect x="433" y="475" width="1" height="5" fill="#008000"/>
<rect x="430" y="477" width="6" height="1" fill="#008000"/>
<rect x="440" y="480" width="1" height="3" fill="#008000"/>
<rect x="437" y="480" width="6" height="1" fill="#008000"/>
<rect x="447" y="467" width="1" height="12" fill="#ff0000"/>
<rect x="444.5" y="467.5" width="5" height="11" fill="#fff" stroke="#ff0000" stroke-width="1"/>
<rect x="454" y="455" width="1" height="13" fill="#ff0000"/>
<rect x="451.5" y="457.5" width="5" height="9" fill="#fff" stroke="#ff0000" stroke-width="1"/>
<rect x="461" y="451" width="1" height="8" fill="#ff0000"/>
<rect x="458.5" y="452.5" width="5" height="5" fill="#fff" stroke="#ff0000" stroke-width="1"/>
<rect x="468" y="443" width="1" height="11" fill="#ff0000"/>
<rect x="465.5" y="443.5" width="5" height="8" fill="#fff" stroke="#ff0000" stroke-width="1"/>
<rect x="475" y="440" width="1" height="5" fill="#ff0000"/>
<rect x="472" y="442" width="6" height="1" fill="#ff0000"/>
<rect x="482" y="440" width="1" height="5" fill="#ff0000"/>
<rect x="479" y="441" width="6" height="1" fill="#ff0000"/>
<rect x="489" y="441" width="1" height="6" fill="#008000"/>
<rect x="486" y="441" width="6" height="4" fill="#008000"/>
<rect x="496" y="443" width="1" height="6" fill="#ff0000"/>
<rect x="493" y="443" width="6" height="2" fill="#ff0000"/>
<rect x="503" y="436" width="1" height="12" fill="#008000"/>
<rect x="500" y="442" width="6" height="3" fill="#008000"/>
<rect x="510" y="429" width="1" height="13" fill="#ff0000"/>
<rect x="507.5" y="430.5" width="5" height="9" fill="#fff" stroke="#ff0000" stroke-width="1"/>
<rect x="517" y="421" width="1" height="16" fill="#008000"/>
<rect x="514" y="427" width="6" height="4" fill="#008000"/>
<rect x="524" y="424" width="1" height="15" fill="#ff0000"/>
<rect x="521.5" y="424.5" width="5" height="10" fill="#fff" stroke="#ff0000" stroke-width="1"/>
<rect x="531" y="421" width="1" height="10" fill="#008000"/>
<rect x="528" y="424" width="6" height="3" fill="#008000"/>
<rect x="538" y="428" width="1" height="6" fill="#ff0000"/>
<rect x="535" y="428" width="6" height="1" fill="#ff0000"/>
<rect x="545" y="420" width="1" height="11" fill="#008000"/>
<rect x="542" y="420" width="6" height="9" fill="#008000"/>
<rect x="552" y="429" width="1" height="7" fill="#008000"/>
<rect x="549" y="429" width="6" height="5" fill="#008000"/>
<rect x="559" y="434" width="1" height="5" fill="#008000"/>
<rect x="556" y="436" width="6" height="1" fill="#008000"/>
<rect x="566" y="434" width="1" height="6" fill="#ff0000"/>
<rect x="563.5" y="435.5" width="5" height="3" fill="#fff" stroke="#ff0000" stroke-width="1"/>
<rect x="573" y="425" width="1" height="12" fill="#ff0000"/>
<rect x="570.5" y="426.5" width="5" height="8" fill="#fff" stroke="#ff0000" stroke-width="1"/>
<rect x="580" y="409" width="1" height="14" fill="#ff0000"/>
<rect x="577.5" y="413.5" width="5" height="7" fill="#fff" stroke="#ff0000" stroke-width="1"/>
<rect x="587" y="403" width="1" height="12" fill="#ff0000"/>
<rect x="584.5" y="403.5" width="5" height="9" fill="#fff" stroke="#ff0000" stroke-width="1"/>
<rect x="594" y="393" width="1" height="10" fill="#ff0000"/>
<rect x="591.5" y="393.5" width="5" height="8" fill="#fff" stroke="#ff0000" stroke-width="1"/>
<rect x="601" y="386" width="1" height="9" fill="#ff0000"/>
<rect x="598.5" y="386.5" width="5" height="3" fill="#fff" stroke="#ff0000" stroke-width="1"/>
<rect x="608" y="370" width="1" height="18" fill="#ff0000"/>
<rect x="605.5" y="371.5" width="5" height="14" fill="#fff" stroke="#ff0000" stroke-width="1"/>
<rect x="615" y="362" width="1" height="13" fill="#008000"/>
<rect x="612" y="369" width="6" height="3" fill="#008000"/>
<rect x="622" y="345" width="1" height="31" fill="#ff0000"/>
<rect x="619.5" y="349.5" width="5" height="26" fill="#fff" stroke="#ff0000" stroke-width="1"/>
<rect x="629" y="332" width="1" height="25" fill="#ff0000"/>
<rect x="626.5" y="345.5" width="5" height="2" fill="#fff" stroke="#ff0000" stroke-width="1"/>
<rect x="636" y="311" width="1" height="36" fill="#ff0000"/>
<rect x="633.5" y="311.5" width="5" height="32" fill="#fff" stroke="#ff0000" stroke-width="1"/>
<rect x="643" y="289" width="1" height="46" fill="#ff0000"/>
<rect x="640.5" y="301.5" width="5" height="2" fill="#fff" stroke="#ff0000" stroke-width="1"/>
<rect x="650" y="272" width="1" height="45" fill="#ff0000"/>
<rect x="647.5" y="278.5" width="5" height="30" fill="#fff" stroke="#ff0000" stroke-width="1"/>
<rect x="657" y="258" width="1" height="71" fill="#008000"/>
<rect x="654" y="285" width="6" height="38" fill="#008000"/>
<rect x="664" y="298" width="1" height="39" fill="#ff0000"/>
<rect x="661.5" y="300.5" width="5" height="22" fill="#fff" stroke="#ff0000" stroke-width="1"/>
<rect x="671" y="293" width="1" height="21" fill="#ff0000"/>
<rect x="668.5" y="304.5" width="5" height="3" fill="#fff" stroke="#ff0000" stroke-width="1"/>
<rect x="678" y="294" width="1" height="13" fill="#ff0000"/>
<rect x="675" y="301" width="6" height="2" fill="#ff0000"/>
<rect x="685" y="294" width="1" height="20" fill="#ff0000"/>
<rect x="682.5" y="296.5" width="5" height="8" fill="#fff" stroke="#ff0000" stroke-width="1"/>
<rect x="692" y="277" width="1" height="22" fill="#ff0000"/>
<rect x="689.5" y="277.5" width="5" height="18" fill="#fff" stroke="#ff0000" stroke-width="1"/>
<rect x="699" y="262" width="1" height="23" fill="#ff0000"/>
<rect x="696.5" y="266.5" width="5" height="8" fill="#fff" stroke="#ff0000" stroke-width="1"/>
<rect x="706" y="259" width="1" height="16" fill="#008000"/>
<rect x="703" y="266" width="6" height="1" fill="#008000"/>
<rect x="713" y="251" width="1" height="27" fill="#ff0000"/>
<rect x="710.5" y="253.5" width="5" height="15" fill="#fff" stroke="#ff0000" stroke-width="1"/>
<rect x="720" y="232" width="1" height="26" fill="#008000"/>
<rect x="717" y="248" width="6" height="1" fill="#008000"/>
<rect x="727" y="246" width="1" height="31" fill="#008000"/>
<rect x="724" y="260" width="6" height="15" fill="#008000"/>
<rect x="734" y="270" width="1" height="31" fill="#008000"/>
<rect x="731" y="273" width="6" height="18" fill="#008000"/>
<rect x="741" y="263" width="1" height="29" fill="#ff0000"/>
<rect x="738.5" y="263.5" width="5" height="21" fill="#fff" stroke="#ff0000" stroke-width="1"/>
<rect x="748" y="238" width="1" height="28" fill="#ff0000"/>
<rect x="745.5" y="240.5" width="5" height="21" fill="#fff" stroke="#ff0000" stroke-width="1"/>
<rect x="755" y="222" width="1" height="26" fill="#008000"/>
<rect x="752" y="224" width="6" height="13" fill="#008000"/>
<rect x="762" y="231" width="1" height="16" fill="#ff0000"/>
<rect x="759" y="238" width="6" height="1" fill="#ff0000"/>
<rect x="769" y="217" width="1" height="23" fill="#ff0000"/>
<rect x="766.5" y="218.5" width="5" height="16" fill="#fff" stroke="#ff0000" stroke-width="1"/>
<rect x="776" y="181" width="1" height="33" fill="#ff0000"/>
<rect x="773.5" y="186.5" width="5" height="26" fill="#fff" stroke="#ff0000" stroke-width="1"/>
<rect x="783" y="174" width="1" height="25" fill="#ff0000"/>
<rect x="780.5" y="186.5" width="5" height="5" fill="#fff" stroke="#ff0000" stroke-width="1"/>
<rect x="790" y="178" width="1" height="19" fill="#ff0000"/>
<rect x="787.5" y="180.5" width="5" height="12" fill="#fff" stroke="#ff0000" stroke-width="1"/>
<rect x="797" y="177" width="1" height="27" fill="#008000"/>
<rect x="794" y="180" width="6" height="23" fill="#008000"/>
<rect x="804" y="171" width="1" height="38" fill="#ff0000"/>
<rect x="801.5" y="204.5" width="5" height="2" fill="#fff" stroke="#ff0000" stroke-width="1"/>
<rect x="811" y="208" width="1" height="22" fill="#008000"/>
<rect x="808" y="212" width="6" height="8" fill="#008000"/>
<rect x="818" y="211" width="1" height="14" fill="#ff0000"/>
<rect x="815.5" y="218.5" width="5" height="2" fill="#fff" stroke="#ff0000" stroke-width="1"/>
<rect x="825" y="210" width="1" height="20" fill="#008000"/>
<rect x="822" y="216" width="6" height="6" fill="#008000"/>
<rect x="832" y="190" width="1" height="36" fill="#ff0000"/>
<rect x="829.5" y="190.5" width="5" height="30" fill="#fff" stroke="#ff0000" stroke-width="1"/>
<rect x="839" y="172" width="1" height="17" fill="#ff0000"/>
<rect x="836.5" y="179.5" width="5" height="8" fill="#fff" stroke="#ff0000" stroke-width="1"/>
<rect x="846" y="212" width="1" height="46" fill="#008000"/>
<rect x="843" y="231" width="6" height="20" fill="#008000"/>
<rect x="853" y="231" width="1" height="25" fill="#ff0000"/>
<rect x="850.5" y="235.5" width="5" height="16" fill="#fff" stroke="#ff0000" stroke-width="1"/>
<rect x="860" y="190" width="1" height="44" fill="#ff0000"/>
<rect x="857.5" y="194.5" width="5" height="36" fill="#fff" stroke="#ff0000" stroke-width="1"/>
<rect x="867" y="186" width="1" height="16" fill="#ff0000"/>
<rect x="864.5" y="188.5" width="5" height="4" fill="#fff" stroke="#ff0000" stroke-width="1"/>
<rect x="874" y="170" width="1" height="22" fill="#008000"/>
<rect x="871" y="184" width="6" height="2" fill="#008000"/>
<rect x="881" y="177" width="1" height="17" fill="#ff0000"/>
<rect x="878.5" y="177.5" width="5" height="9" fill="#fff" stroke="#ff0000" stroke-width="1"/>
<rect x="888" y="175" width="1" height="28" fill="#008000"/>
<rect x="885" y="175" width="6" height="10" fill="#008000"/>
<rect x="895" y="185" width="1" height="17" fill="#008000"/>
<rect x="892" y="193" width="6" height="6" fill="#008000"/>
<rect x="902" y="204" width="1" height="14" fill="#ff0000"/>
<rect x="899" y="211" width="6" height="1" fill="#ff0000"/>
<rect x="909" y="203" width="1" height="22" fill="#008000"/>
<rect x="906" y="207" width="6" height="18" fill="#008000"/>
<rect x="916" y="236" width="1" height="14" fill="#008000"/>
<rect x="913" y="241" width="6" height="7" fill="#008000"/>
<rect x="923" y="225" width="1" height="22" fill="#ff0000"/>
<rect x="920.5" y="227.5" width="5" height="12" fill="#fff" stroke="#ff0000" stroke-width="1"/>
<rect x="930" y="217" width="1" height="19" fill="#008000"/>
<rect x="927" y="224" width="6" height="11" fill="#008000"/>
<rect x="937" y="213" width="1" height="33" fill="#008000"/>
<rect x="934" y="213" width="6" height="32" fill="#008000"/>
<rect x="944" y="248" width="1" height="21" fill="#008000"/>
<rect x="941" y="249" width="6" height="13" fill="#008000"/>
<rect x="951" y="257" width="1" height="9" fill="#ff0000"/>
<rect x="948.5" y="257.5" width="5" height="8" fill="#fff" stroke="#ff0000" stroke-width="1"/>
<rect x="958" y="244" width="1" height="16" fill="#ff0000"/>
<rect x="955.5" y="244.5" width="5" height="13" fill="#fff" stroke="#ff0000" stroke-width="1"/>
<rect x="965" y="237" width="1" height="9" fill="#ff0000"/>
<rect x="962.5" y="240.5" width="5" height="2" fill="#fff" stroke="#ff0000" stroke-width="1"/>
<rect x="972" y="233" width="1" height="13" fill="#ff0000"/>
<rect x="969.5" y="235.5" width="5" height="4" fill="#fff" stroke="#ff0000" stroke-width="1"/>
<rect x="979" y="218" width="1" height="15" fill="#ff0000"/>
<rect x="976.5" y="227.5" width="5" height="4" fill="#fff" stroke="#ff0000" stroke-width="1"/>
<rect x="986" y="220" width="1" height="9" fill="#ff0000"/>
<rect x="983.5" y="222.5" width="5" height="3" fill="#fff" stroke="#ff0000" stroke-width="1"/>
<rect x="993" y="212" width="1" height="8" fill="#ff0000"/>
<rect x="990.5" y="215.5" width="5" height="3" fill="#fff" stroke="#ff0000" stroke-width="1"/>
<rect x="1000" y="212" width="1" height="12" fill="#008000"/>
<rect x="997" y="212" width="6" height="8" fill="#008000"/>
<rect x="1007" y="200" width="1" height="27" fill="#ff0000"/>
<rect x="1004.5" y="201.5" width="5" height="20" fill="#fff" stroke="#ff0000" stroke-width="1"/>
<rect x="1014" y="193" width="1" height="10" fill="#ff0000"/>
<rect x="1011.5" y="197.5" width="5" height="3" fill="#fff" stroke="#ff0000" stroke-width="1"/>
<rect x="1021" y="190" width="1" height="11" fill="#ff0000"/>
<rect x="1018" y="190" width="6" height="1" fill="#ff0000"/>
<rect x="66" y="574" width="6" height="15" fill="#008000"/>
<rect x="73.5" y="574.5" width="5" height="14" fill="none" stroke="#ff0000" stroke-width="1"/>
<rect x="80" y="574" width="6" height="15" fill="#008000"/>
<rect x="87.5" y="577.5" width="5" height="11" fill="none" stroke="#ff0000" stroke-width="1"/>
<rect x="94.5" y="576.5" width="5" height="12" fill="none" stroke="#ff0000" stroke-width="1"/>
<rect x="101" y="576" width="6" height="13" fill="#008000"/>
<rect x="108" y="574" width="6" height="15" fill="#008000"/>
<rect x="115" y="574" width="6" height="15" fill="#008000"/>
<rect x="122.5" y="576.5" width="5" height="12" fill="none" stroke="#ff0000" stroke-width="1"/>
<rect x="129.5" y="575.5" width="5" height="13" fill="none" stroke="#ff0000" stroke-width="1"/>
<rect x="136.5" y="574.5" width="5" height="14" fill="none" stroke="#ff0000" stroke-width="1"/>
<rect x="143" y="575" width="6" height="14" fill="#008000"/>
<rect x="150" y="575" width="6" height="14" fill="#008000"/>
<rect x="157.5" y="575.5" width="5" height="13" fill="none" stroke="#ff0000" stroke-width="1"/>
<rect x="164" y="575" width="6" height="14" fill="#008000"/>
<rect x="171" y="575" width="6" height="14" fill="#008000"/>
<rect x="178.5" y="579.5" width="5" height="9" fill="none" stroke="#ff0000" stroke-width="1"/>
<rect x="185" y="578" width="6" height="11" fill="#008000"/>
<rect x="192.5" y="580.5" width="5" height="8" fill="none" stroke="#ff0000" stroke-width="1"/>
<rect x="199.5" y="578.5" width="5" height="10" fill="none" stroke="#ff0000" stroke-width="1"/>
<rect x="206.5" y="573.5" width="5" height="15" fill="none" stroke="#ff0000" stroke-width="1"/>
<rect x="213.5" y="571.5" width="5" height="17" fill="none" stroke="#ff0000" stroke-width="1"/>
<rect x="220.5" y="572.5" width="5" height="16" fill="none" stroke="#ff0000" stroke-width="1"/>
<rect x="227.5" y="571.5" width="5" height="17" fill="none" stroke="#ff0000" stroke-width="1"/>
<rect x="234" y="572" width="6" height="17" fill="#008000"/>
<rect x="241" y="573" width="6" height="16" fill="#008000"/>
<rect x="248" y="570" width="6" height="19" fill="#008000"/>
<rect x="255.5" y="572.5" width="5" height="16" fill="none" stroke="#ff0000" stroke-width="1"/>
<rect x="262.5" y="571.5" width="5" height="17" fill="none" stroke="#ff0000" stroke-width="1"/>
<rect x="269" y="563" width="6" height="26" fill="#008000"/>
<rect x="276.5" y="571.5" width="5" height="17" fill="none" stroke="#ff0000" stroke-width="1"/>
<rect x="283.5" y="573.5" width="5" height="15" fill="none" stroke="#ff0000" stroke-width="1"/>
<rect x="290.5" y="574.5" width="5" height="14" fill="none" stroke="#ff0000" stroke-width="1"/>
<rect x="297" y="574" width="6" height="15" fill="#008000"/>
<rect x="304.5" y="576.5" width="5" height="12" fill="none" stroke="#ff0000" stroke-width="1"/>
<rect x="311.5" y="570.5" width="5" height="18" fill="none" stroke="#ff0000" stroke-width="1"/>
<rect x="318" y="570" width="6" height="19" fill="#008000"/>
<rect x="325.5" y="574.5" width="5" height="14" fill="none" stroke="#ff0000" stroke-width="1"/>
<rect x="332.5" y="572.5" width="5" height="16" fill="none" stroke="#ff0000" stroke-width="1"/>
<rect x="339.5" y="572.5" width="5" height="16" fill="none" stroke="#ff0000" stroke-width="1"/>
<rect x="346.5" y="572.5" width="5" height="16" fill="none" stroke="#ff0000" stroke-width="1"/>
<rect x="353.5" y="569.5" width="5" height="19" fill="none" stroke="#ff0000" stroke-width="1"/>
<rect x="360" y="570" width="6" height="19" fill="#008000"/>
<rect x="367" y="572" width="6" height="17" fill="#008000"/>
<rect x="374" y="572" width="6" height="17" fill="#008000"/>
<rect x="381.5" y="572.5" width="5" height="16" fill="none" stroke="#ff0000" stroke-width="1"/>
<rect x="388" y="568" width="6" height="21" fill="#008000"/>
<rect x="395" y="571" width="6" height="18" fill="#008000"/>
<rect x="402.5" y="575.5" width="5" height="13" fill="none" stroke="#ff0000" stroke-width="1"/>
<rect x="409" y="575" width="6" height="14" fill="#008000"/>
<rect x="416" y="576" width="6" height="13" fill="#008000"/>
<rect x="423" y="575" width="6" height="14" fill="#008000"/>
<rect x="430" y="578" width="6" height="11" fill="#008000"/>
<rect x="437" y="578" width="6" height="11" fill="#008000"/>
<rect x="444.5" y="574.5" width="5" height="14" fill="none" stroke="#ff0000" stroke-width="1"/>
<rect x="451.5" y="566.5" width="5" height="22" fill="none" stroke="#ff0000" stroke-width="1"/>
<rect x="458.5" y="564.5" width="5" height="24" fill="none" stroke="#ff0000" stroke-width="1"/>
<rect x="465.5" y="561.5" width="5" height="27" fill="none" stroke="#ff0000" stroke-width="1"/>
<rect x="472.5" y="563.5" width="5" height="25" fill="none" stroke="#ff0000" stroke-width="1"/>
<rect x="479.5" y="563.5" width="5" height="25" fill="none" stroke="#ff0000" stroke-width="1"/>
<rect x="486" y="566" width="6" height="23" fill="#008000"/>
<rect x="493.5" y="570.5" width="5" height="18" fill="none" stroke="#ff0000" stroke-width="1"/>
<rect x="500" y="564" width="6" height="25" fill="#008000"/>
<rect x="507.5" y="563.5" width="5" height="25" fill="none" stroke="#ff0000" stroke-width="1"/>
<rect x="514" y="554" width="6" height="35" fill="#008000"/>
<rect x="521.5" y="567.5" width="5" height="21" fill="none" stroke="#ff0000" stroke-width="1"/>
<rect x="528" y="564" width="6" height="25" fill="#008000"/>
<rect x="535.5" y="570.5" width="5" height="18" fill="none" stroke="#ff0000" stroke-width="1"/>
<rect x="542" y="571" width="6" height="18" fill="#008000"/>
<rect x="549" y="572" width="6" height="17" fill="#008000"/>
<rect x="556" y="573" width="6" height="16" fill="#008000"/>
<rect x="563.5" y="575.5" width="5" height="13" fill="none" stroke="#ff0000" stroke-width="1"/>
<rect x="570.5" y="571.5" width="5" height="17" fill="none" stroke="#ff0000" stroke-width="1"/>
<rect x="577.5" y="558.5" width="5" height="30" fill="none" stroke="#ff0000" stroke-width="1"/>
<rect x="584.5" y="562.5" width="5" height="26" fill="none" stroke="#ff0000" stroke-width="1"/>
<rect x="591.5" y="560.5" width="5" height="28" fill="none" stroke="#ff0000" stroke-width="1"/>
<rect x="598.5" y="558.5" width="5" height="30" fill="none" stroke="#ff0000" stroke-width="1"/>
<rect x="605.5" y="550.5" width="5" height="38" fill="none" stroke="#ff0000" stroke-width="1"/>
<rect x="612" y="551" width="6" height="38" fill="#008000"/>
<rect x="619.5" y="552.5" width="5" height="36" fill="none" stroke="#ff0000" stroke-width="1"/>
<rect x="626.5" y="541.5" width="5" height="47" fill="none" stroke="#ff0000" stroke-width="1"/>
<rect x="633.5" y="543.5" width="5" height="45" fill="none" stroke="#ff0000" stroke-width="1"/>
<rect x="640.5" y="534.5" width="5" height="54" fill="none" stroke="#ff0000" stroke-width="1"/>
<rect x="647.5" y="539.5" width="5" height="49" fill="none" stroke="#ff0000" stroke-width="1"/>
<rect x="654" y="523" width="6" height="66" fill="#008000"/>
<rect x="661.5" y="545.5" width="5" height="43" fill="none" stroke="#ff0000" stroke-width="1"/>
<rect x="668.5" y="549.5" width="5" height="39" fill="none" stroke="#ff0000" stroke-width="1"/>
<rect x="675.5" y="554.5" width="5" height="34" fill="none" stroke="#ff0000" stroke-width="1"/>
<rect x="682.5" y="555.5" width="5" height="33" fill="none" stroke="#ff0000" stroke-width="1"/>
<rect x="689.5" y="550.5" width="5" height="38" fill="none" stroke="#ff0000" stroke-width="1"/>
<rect x="696.5" y="543.5" width="5" height="45" fill="none" stroke="#ff0000" stroke-width="1"/>
<rect x="703" y="552" width="6" height="37" fill="#008000"/>
<rect x="710.5" y="544.5" width="5" height="44" fill="none" stroke="#ff0000" stroke-width="1"/>
<rect x="717" y="531" width="6" height="58" fill="#008000"/>
<rect x="724" y="552" width="6" height="37" fill="#008000"/>
<rect x="731" y="557" width="6" height="32" fill="#008000"/>
<rect x="738.5" y="557.5" width="5" height="31" fill="none" stroke="#ff0000" stroke-width="1"/>
<rect x="745.5" y="550.5" width="5" height="38" fill="none" stroke="#ff0000" stroke-width="1"/>
<rect x="752" y="545" width="6" height="44" fill="#008000"/>
<rect x="759.5" y="555.5" width="5" height="33" fill="none" stroke="#ff0000" stroke-width="1"/>
<rect x="766.5" y="554.5" width="5" height="34" fill="none" stroke="#ff0000" stroke-width="1"/>
<rect x="773.5" y="544.5" width="5" height="44" fill="none" stroke="#ff0000" stroke-width="1"/>
<rect x="780.5" y="546.5" width="5" height="42" fill="none" stroke="#ff0000" stroke-width="1"/>
<rect x="787.5" y="555.5" width="5" height="33" fill="none" stroke="#ff0000" stroke-width="1"/>
<rect x="794" y="557" width="6" height="32" fill="#008000"/>
<rect x="801.5" y="554.5" width="5" height="34" fill="none" stroke="#ff0000" stroke-width="1"/>
<rect x="808" y="561" width="6" height="28" fill="#008000"/>
<rect x="815.5" y="570.5" width="5" height="18" fill="none" stroke="#ff0000" stroke-width="1"/>
<rect x="822" y="568" width="6" height="21" fill="#008000"/>
<rect x="829.5" y="565.5" width="5" height="23" fill="none" stroke="#ff0000" stroke-width="1"/>
<rect x="836.5" y="560.5" width="5" height="28" fill="none" stroke="#ff0000" stroke-width="1"/>
<rect x="843" y="555" width="6" height="34" fill="#008000"/>
<rect x="850.5" y="558.5" width="5" height="30" fill="none" stroke="#ff0000" stroke-width="1"/>
<rect x="857.5" y="554.5" width="5" height="34" fill="none" stroke="#ff0000" stroke-width="1"/>
<rect x="864.5" y="559.5" width="5" height="29" fill="none" stroke="#ff0000" stroke-width="1"/>
<rect x="871" y="558" width="6" height="31" fill="#008000"/>
<rect x="878.5" y="562.5" width="5" height="26" fill="none" stroke="#ff0000" stroke-width="1"/>
<rect x="885" y="557" width="6" height="32" fill="#008000"/>
<rect x="892" y="562" width="6" height="27" fill="#008000"/>
<rect x="899.5" y="566.5" width="5" height="22" fill="none" stroke="#ff0000" stroke-width="1"/>
<rect x="906" y="567" width="6" height="22" fill="#008000"/>
<rect x="913" y="568" width="6" height="21" fill="#008000"/>
<rect x="920.5" y="568.5" width="5" height="20" fill="none" stroke="#ff0000" stroke-width="1"/>
<rect x="927" y="568" width="6" height="21" fill="#008000"/>
<rect x="934" y="563" width="6" height="26" fill="#008000"/>
<rect x="941" y="568" width="6" height="21" fill="#008000"/>
<rect x="948.5" y="571.5" width="5" height="17" fill="none" stroke="#ff0000" stroke-width="1"/>
<rect x="955.5" y="572.5" width="5" height="16" fill="none" stroke="#ff0000" stroke-width="1"/>
<rect x="962.5" y="574.5" width="5" height="14" fill="none" stroke="#ff0000" stroke-width="1"/>
<rect x="969.5" y="572.5" width="5" height="16" fill="none" stroke="#ff0000" stroke-width="1"/>
<rect x="976.5" y="567.5" width="5" height="21" fill="none" stroke="#ff0000" stroke-width="1"/>
<rect x="983.5" y="570.5" width="5" height="18" fill="none" stroke="#ff0000" stroke-width="1"/>
<rect x="990.5" y="570.5" width="5" height="18" fill="none" stroke="#ff0000" stroke-width="1"/>
<rect x="997" y="569" width="6" height="20" fill="#008000"/>
<rect x="1004.5" y="563.5" width="5" height="25" fill="none" stroke="#ff0000" stroke-width="1"/>
<rect x="1011.5" y="563.5" width="5" height="25" fill="none" stroke="#ff0000" stroke-width="1"/>
<rect x="1018.5" y="560.5" width="5" height="28" fill="none" stroke="#ff0000" stroke-width="1"/>
<rect x="0" y="589" width="1230" height="2" fill="#909090"/>
<rect x="69" y="650" width="1" height="8" fill="#ff0000"/>
<rect x="76" y="651" width="1" height="7" fill="#ff0000"/>
<rect x="83" y="654" width="1" height="4" fill="#ff0000"/>
<rect x="90" y="655" width="1" height="3" fill="#ff0000"/>
<rect x="97" y="655" width="1" height="3" fill="#ff0000"/>
<rect x="104" y="656" width="1" height="2" fill="#ff0000"/>
<rect x="111" y="657" width="1" height="1" fill="#ff0000"/>
<rect x="146" y="658" width="1" height="1" fill="#008000"/>
<rect x="153" y="658" width="1" height="1" fill="#008000"/>
<rect x="160" y="658" width="1" height="2" fill="#008000"/>
<rect x="167" y="658" width="1" height="3" fill="#008000"/>
<rect x="174" y="658" width="1" height="4" fill="#008000"/>
<rect x="181" y="658" width="1" height="5" fill="#008000"/>
<rect x="188" y="658" width="1" height="6" fill="#008000"/>
<rect x="195" y="658" width="1" height="6" fill="#008000"/>
<rect x="202" y="658" width="1" height="4" fill="#008000"/>
<rect x="209" y="658" width="1" height="2" fill="#008000"/>
<rect x="223" y="656" width="1" height="2" fill="#ff0000"/>
<rect x="230" y="656" width="1" height="2" fill="#ff0000"/>
<rect x="237" y="654" width="1" height="4" fill="#ff0000"/>
<rect x="244" y="654" width="1" height="4" fill="#ff0000"/>
<rect x="251" y="655" width="1" height="3" fill="#ff0000"/>
<rect x="258" y="655" width="1" height="3" fill="#ff0000"/>
<rect x="265" y="655" width="1" height="3" fill="#ff0000"/>
<rect x="286" y="658" width="1" height="1" fill="#008000"/>
<rect x="293" y="658" width="1" height="1" fill="#008000"/>
<rect x="300" y="658" width="1" height="2" fill="#008000"/>
<rect x="307" y="658" width="1" height="2" fill="#008000"/>
<rect x="314" y="658" width="1" height="2" fill="#008000"/>
<rect x="321" y="658" width="1" height="2" fill="#008000"/>
<rect x="328" y="658" width="1" height="1" fill="#008000"/>
<rect x="335" y="658" width="1" height="1" fill="#008000"/>
<rect x="377" y="658" width="1" height="2" fill="#008000"/>
<rect x="384" y="658" width="1" height="3" fill="#008000"/>
<rect x="391" y="658" width="1" height="3" fill="#008000"/>
<rect x="398" y="658" width="1" height="4" fill="#008000"/>
<rect x="405" y="658" width="1" height="4" fill="#008000"/>
<rect x="412" y="658" width="1" height="5" fill="#008000"/>
<rect x="419" y="658" width="1" height="7" fill="#008000"/>
<rect x="426" y="658" width="1" height="8" fill="#008000"/>
<rect x="433" y="658" width="1" height="8" fill="#008000"/>
<rect x="440" y="658" width="1" height="9" fill="#008000"/>
<rect x="447" y="658" width="1" height="8" fill="#008000"/>
<rect x="454" y="658" width="1" height="3" fill="#008000"/>
<rect x="461" y="658" width="1" height="2" fill="#008000"/>
<rect x="468" y="655" width="1" height="3" fill="#ff0000"/>
<rect x="475" y="654" width="1" height="4" fill="#ff0000"/>
<rect x="482" y="652" width="1" height="6" fill="#ff0000"/>
<rect x="489" y="654" width="1" height="4" fill="#ff0000"/>
<rect x="496" y="654" width="1" height="4" fill="#ff0000"/>
<rect x="503" y="656" width="1" height="2" fill="#ff0000"/>
<rect x="510" y="653" width="1" height="5" fill="#ff0000"/>
<rect x="517" y="653" width="1" height="5" fill="#ff0000"/>
<rect x="524" y="652" width="1" height="6" fill="#ff0000"/>
<rect x="531" y="652" width="1" height="6" fill="#ff0000"/>
<rect x="538" y="653" width="1" height="5" fill="#ff0000"/>
<rect x="545" y="655" width="1" height="3" fill="#ff0000"/>
<rect x="566" y="658" width="1" height="1" fill="#008000"/>
<rect x="573" y="658" width="1" height="1" fill="#008000"/>
<rect x="580" y="658" width="1" height="1" fill="#008000"/>
<rect x="587" y="654" width="1" height="4" fill="#ff0000"/>
<rect x="594" y="652" width="1" height="6" fill="#ff0000"/>
<rect x="601" y="650" width="1" height="8" fill="#ff0000"/>
<rect x="608" y="647" width="1" height="11" fill="#ff0000"/>
<rect x="615" y="645" width="1" height="13" fill="#ff0000"/>
<rect x="622" y="643" width="1" height="15" fill="#ff0000"/>
<rect x="629" y="642" width="1" height="16" fill="#ff0000"/>
<rect x="636" y="637" width="1" height="21" fill="#ff0000"/>
<rect x="643" y="634" width="1" height="24" fill="#ff0000"/>
<rect x="650" y="631" width="1" height="27" fill="#ff0000"/>
<rect x="657" y="637" width="1" height="21" fill="#ff0000"/>
<rect x="664" y="640" width="1" height="18" fill="#ff0000"/>
<rect x="671" y="643" width="1" height="15" fill="#ff0000"/>
<rect x="678" y="645" width="1" height="13" fill="#ff0000"/>
<rect x="685" y="648" width="1" height="10" fill="#ff0000"/>
<rect x="692" y="648" width="1" height="10" fill="#ff0000"/>
<rect x="699" y="648" width="1" height="10" fill="#ff0000"/>
<rect x="706" y="650" width="1" height="8" fill="#ff0000"/>
<rect x="713" y="650" width="1" height="8" fill="#ff0000"/>
<rect x="720" y="650" width="1" height="8" fill="#ff0000"/>
<rect x="727" y="656" width="1" height="2" fill="#ff0000"/>
<rect x="734" y="658" width="1" height="3" fill="#008000"/>
<rect x="741" y="658" width="1" height="5" fill="#008000"/>
<rect x="748" y="658" width="1" height="2" fill="#008000"/>
<rect x="755" y="658" width="1" height="1" fill="#008000"/>
<rect x="762" y="658" width="1" height="1" fill="#008000"/>
<rect x="776" y="652" width="1" height="6" fill="#ff0000"/>
<rect x="783" y="650" width="1" height="8" fill="#ff0000"/>
<rect x="790" y="648" width="1" height="10" fill="#ff0000"/>
<rect x="797" y="653" width="1" height="5" fill="#ff0000"/>
<rect x="811" y="658" width="1" height="5" fill="#008000"/>
<rect x="818" y="658" width="1" height="8" fill="#008000"/>
<rect x="825" y="658" width="1" height="10" fill="#008000"/>
<rect x="832" y="658" width="1" height="9" fill="#008000"/>
<rect x="839" y="658" width="1" height="7" fill="#008000"/>
<rect x="846" y="658" width="1" height="15" fill="#008000"/>
<rect x="853" y="658" width="1" height="15" fill="#008000"/>
<rect x="860" y="658" width="1" height="11" fill="#008000"/>
<rect x="867" y="658" width="1" height="10" fill="#008000"/>
<rect x="874" y="658" width="1" height="8" fill="#008000"/>
<rect x="881" y="658" width="1" height="6" fill="#008000"/>
<rect x="888" y="658" width="1" height="8" fill="#008000"/>
<rect x="895" y="658" width="1" height="8" fill="#008000"/>
<rect x="902" y="658" width="1" height="10" fill="#008000"/>
<rect x="909" y="658" width="1" height="15" fill="#008000"/>
<rect x="916" y="658" width="1" height="19" fill="#008000"/>
<rect x="923" y="658" width="1" height="20" fill="#008000"/>
<rect x="930" y="658" width="1" height="20" fill="#008000"/>
<rect x="937" y="658" width="1" height="19" fill="#008000"/>
<rect x="944" y="658" width="1" height="17" fill="#008000"/>
<rect x="951" y="658" width="1" height="19" fill="#008000"/>
<rect x="958" y="658" width="1" height="20" fill="#008000"/>
<rect x="965" y="658" width="1" height="17" fill="#008000"/>
<rect x="972" y="658" width="1" height="13" fill="#008000"/>
<rect x="979" y="658" width="1" height="8" fill="#008000"/>
<rect x="986" y="658" width="1" height="4" fill="#008000"/>
<rect x="993" y="658" width="1" height="3" fill="#008000"/>
<rect x="1000" y="658" width="1" height="1" fill="#008000"/>
<rect x="1007" y="654" width="1" height="4" fill="#ff0000"/>
<rect x="1014" y="651" width="1" height="7" fill="#ff0000"/>
<rect x="1021" y="649" width="1" height="9" fill="#ff0000"/>
<rect x="1028" y="648" width="1" height="10" fill="#ff0000"/>
<rect x="1035" y="648" width="1" height="10" fill="#ff0000"/>
<rect x="1042" y="649" width="1" height="9" fill="#ff0000"/>
<rect x="1049" y="652" width="1" height="6" fill="#ff0000"/>
<rect x="1056" y="653" width="1" height="5" fill="#ff0000"/>
<rect x="1063" y="654" width="1" height="4" fill="#ff0000"/>
<rect x="1070" y="654" width="1" height="4" fill="#ff0000"/>
<rect x="1077" y="656" width="1" height="2" fill="#ff0000"/>
<rect x="1084" y="656" width="1" height="2" fill="#ff0000"/>
<rect x="1098" y="658" width="1" height="2" fill="#008000"/>
<rect x="1105" y="658" width="1" height="2" fill="#008000"/>
<rect x="1112" y="658" width="1" height="2" fill="#008000"/>
<rect x="1119" y="658" width="1" height="2" fill="#008000"/>
<rect x="1126" y="658" width="1" height="2" fill="#008000"/>
<rect x="1133" y="658" width="1" height="2" fill="#008000"/>
<rect x="1140" y="658" width="1" height="2" fill="#008000"/>
<rect x="1147" y="658" width="1" height="2" fill="#008000"/>
<rect x="1154" y="658" width="1" height="2" fill="#008000"/>
<rect x="1161" y="658" width="1" height="2" fill="#008000"/>
<rect x="1168" y="658" width="1" height="2" fill="#008000"/>
<rect x="1175" y="658" width="1" height="2" fill="#008000"/>
<rect x="1182" y="658" width="1" height="2" fill="#008000"/>
<rect x="1189" y="658" width="1" height="2" fill="#008000"/>
<rect x="1196" y="658" width="1" height="2" fill="#008000"/>
<rect x="1203" y="658" width="1" height="2" fill="#008000"/>
<rect x="1210" y="658" width="1" height="2" fill="#008000"/>
<rect x="1217" y="658" width="1" height="2" fill="#008000"/>
<rect x="1224" y="658" width="1" height="2" fill="#008000"/>
<polyline points="69,644.5 76,643.5 80,643.5 82,644.5 94,644.5 96,645.5 115,645.5 117,645.5 150,645.5 165,647.5 178,649.5 199,651.5 235,645.5 266,644.5 302,647.5 332,648.5 357,647.5 382,647.5 401,649.5 440,656.5 451,656.5 467,652.5 484,649.5 500,648.5 529,644.5 558.5,646.5 582,645.5 602.4,639.5 628.8,629.5 650.7,614.5 675.6,613.5 687,614.5 705,611.5 719.5,609.5 728,611.5 740,616.5 760.5,614.5 781,608.5 792.6,606.5 804.4,609.5 824.8,619.5 839.5,619.5 848.3,626.5 862.4,629.5 884,627.5 896.3,630.5 918,643.5 930.3,647.5 952,658.5 973.6,659.5 989,657.5 1010.6,652.5 1035.4,645.5 1050.8,644.5 1081.7,644.5 1112.6,647.5 1189.8,651.5 1230,653.5" fill="none" stroke="#000" stroke-width="1"/>
<polyline points="69,648.5 76,647.5 80,646.5 164,646.5 178,647.5 192,648.5 207.6,649.5 235,646.5 290.5,646.5 373.5,647.5 415,649.5 445,653.5 470,652.5 500,650.5 544,646.5 582,646.5 617,638.5 655,625.5 690,617.5 728,611.5 748.8,614.5 778,612.5 798.5,610.5 836.5,616.5 850,618.5 868.5,623.5 890,626.5 911.8,630.5 936.5,638.5 958,647.5 979.7,655.5 998.3,656.5 1020,651.5 1050.8,647.5 1091,645.5 1143.5,647.5 1230,651.5" fill="none" stroke="#0000ff" stroke-width="1"/>
<polyline points="874,170.5 893.5,175.5" fill="none" stroke="#0000ff" stroke-width="1"/>
<polyline points="90,511 110,506" fill="none" stroke="#0000ff" stroke-width="1"/>
</svg>
<div class="abs" style="left:-1px;top:138.0px;font:12px/12px 'Liberation Sans',sans-serif;color:#0000ff;white-space:nowrap;letter-spacing:0px;">日<span style="font-family:Liberation Serif">K</span>线</div>
<div class="abs" style="left:66px;top:133.5px;font:9px/9px 'Liberation Sans',sans-serif;color:#a0a0a0;white-space:nowrap;letter-spacing:0px;">08-05</div>
<div class="abs" style="left:126px;top:133.5px;font:9px/9px 'Liberation Sans',sans-serif;color:#a0a0a0;white-space:nowrap;letter-spacing:0px;">08-19</div>
<div class="abs" style="left:196px;top:133.5px;font:9px/9px 'Liberation Sans',sans-serif;color:#a0a0a0;white-space:nowrap;letter-spacing:0px;">09-02</div>
<div class="abs" style="left:266px;top:133.5px;font:9px/9px 'Liberation Sans',sans-serif;color:#a0a0a0;white-space:nowrap;letter-spacing:0px;">09-17</div>
<div class="abs" style="left:335px;top:133.5px;font:9px/9px 'Liberation Sans',sans-serif;color:#a0a0a0;white-space:nowrap;letter-spacing:0px;">10-08</div>
<div class="abs" style="left:405px;top:133.5px;font:9px/9px 'Liberation Sans',sans-serif;color:#a0a0a0;white-space:nowrap;letter-spacing:0px;">10-22</div>
<div class="abs" style="left:475px;top:133.5px;font:9px/9px 'Liberation Sans',sans-serif;color:#a0a0a0;white-space:nowrap;letter-spacing:0px;">11-05</div>
<div class="abs" style="left:545px;top:133.5px;font:9px/9px 'Liberation Sans',sans-serif;color:#a0a0a0;white-space:nowrap;letter-spacing:0px;">11-19</div>
<div class="abs" style="left:615px;top:133.5px;font:9px/9px 'Liberation Sans',sans-serif;color:#a0a0a0;white-space:nowrap;letter-spacing:0px;">12-03</div>
<div class="abs" style="left:685px;top:133.5px;font:9px/9px 'Liberation Sans',sans-serif;color:#a0a0a0;white-space:nowrap;letter-spacing:0px;">12-17</div>
<div class="abs" style="left:755px;top:133.5px;font:9px/9px 'Liberation Sans',sans-serif;color:#a0a0a0;white-space:nowrap;letter-spacing:0px;">12-31</div>
<div class="abs" style="left:825px;top:133.5px;font:9px/9px 'Liberation Sans',sans-serif;color:#a0a0a0;white-space:nowrap;letter-spacing:0px;">01-16</div>
<div class="abs" style="left:895px;top:133.5px;font:9px/9px 'Liberation Sans',sans-serif;color:#a0a0a0;white-space:nowrap;letter-spacing:0px;">01-30</div>
<div class="abs" style="left:965px;top:133.5px;font:9px/9px 'Liberation Sans',sans-serif;color:#a0a0a0;white-space:nowrap;letter-spacing:0px;">02-13</div>
<div class="abs" style="left:1035px;top:133.5px;font:9px/9px 'Liberation Sans',sans-serif;color:#a0a0a0;white-space:nowrap;letter-spacing:0px;">03-06</div>
<div class="abs" style="left:1105px;top:133.5px;font:9px/9px 'Liberation Sans',sans-serif;color:#a0a0a0;white-space:nowrap;letter-spacing:0px;">03-20</div>
<div class="abs" style="left:1175px;top:133.5px;font:9px/9px 'Liberation Sans',sans-serif;color:#a0a0a0;white-space:nowrap;letter-spacing:0px;">04-03</div>
<div class="abs" style="left:1132px;top:145.6px;font:12px/12px 'Liberation Mono',monospace;color:#0000ff;white-space:nowrap;letter-spacing:0px;">1A0001&nbsp;上证指数</div>
<div class="abs" style="right:3px;top:158.0px;font:12px/12px 'Liberation Sans',sans-serif;color:#808080;white-space:nowrap;letter-spacing:0.5px;">266.67%(240)</div>
<div class="abs" style="right:3px;top:227.0px;font:12px/12px 'Liberation Sans',sans-serif;color:#800000;white-space:nowrap;letter-spacing:0.5px;">225.0%(90)</div>
<div class="abs" style="right:3px;top:268.0px;font:12px/12px 'Liberation Sans',sans-serif;color:#ff0000;white-space:nowrap;letter-spacing:0.5px;">200.0%(0)</div>
<div class="abs" style="right:3px;top:309.0px;font:12px/12px 'Liberation Sans',sans-serif;color:#99ccff;white-space:nowrap;letter-spacing:0.5px;">175.0%(270)</div>
<div class="abs" style="right:3px;top:323.0px;font:12px/12px 'Liberation Sans',sans-serif;color:#808080;white-space:nowrap;letter-spacing:0.5px;">166.67%(240)</div>
<div class="abs" style="right:3px;top:392.5px;font:12px/12px 'Liberation Sans',sans-serif;color:#800000;white-space:nowrap;letter-spacing:0.5px;">125.0%(90)</div>
<div class="abs" style="right:3px;top:433.4px;font:12px/12px 'Liberation Sans',sans-serif;color:#ff0000;white-space:nowrap;letter-spacing:0.5px;">100.0%(0)</div>
<div class="abs" style="right:3px;top:475.0px;font:12px/12px 'Liberation Sans',sans-serif;color:#99ccff;white-space:nowrap;letter-spacing:0.5px;">75.0%(270)</div>
<div class="abs" style="right:3px;top:488.3px;font:12px/12px 'Liberation Sans',sans-serif;color:#808080;white-space:nowrap;letter-spacing:0.5px;">66.67%(240)</div>
<div class="abs" style="right:3px;top:557.5px;font:12px/12px 'Liberation Sans',sans-serif;color:#800000;white-space:nowrap;letter-spacing:0.5px;">25.0%(90)</div>
<div class="abs" style="left:894px;top:176.0px;font:12px/12px 'Liberation Sans',sans-serif;color:#0000ff;white-space:nowrap;letter-spacing:0.2px;">3406.7900</div>
<div class="abs" style="left:111px;top:499.5px;font:12px/12px 'Liberation Sans',sans-serif;color:#0000ff;white-space:nowrap;letter-spacing:0.2px;">2180.6001</div>
<div class="abs" style="left:953px;top:163.5px;font:10px/10px 'Liberation Mono',monospace;color:#ff0000;white-space:nowrap;letter-spacing:0px;background:#fff;padding-right:1px;">1</div>
<div class="abs" style="left:1018px;top:173.0px;font:10px/10px 'Liberation Mono',monospace;color:#800080;white-space:nowrap;letter-spacing:0px;">1.618</div>
<div class="abs" style="left:1058px;top:173.0px;font:10px/10px 'Liberation Mono',monospace;color:#ff0000;white-space:nowrap;letter-spacing:0px;">2</div>
<div class="abs" style="left:1123px;top:173.0px;font:10px/10px 'Liberation Mono',monospace;color:#800080;white-space:nowrap;letter-spacing:0px;">2.618</div>
<div class="abs" style="left:1163px;top:173.0px;font:10px/10px 'Liberation Mono',monospace;color:#ff0000;white-space:nowrap;letter-spacing:0px;">3</div>
<div class="abs" style="left:1228px;top:173.0px;font:10px/10px 'Liberation Mono',monospace;color:#800080;white-space:nowrap;letter-spacing:0px;">3</div>
<div class="abs" style="left:953px;top:469.0px;font:10px/10px 'Liberation Sans',sans-serif;color:#ff0000;white-space:nowrap;letter-spacing:0px;background:#fff;">15</div>
<div class="abs" style="left:1018px;top:469.0px;font:10px/10px 'Liberation Sans',sans-serif;color:#800080;white-space:nowrap;letter-spacing:0px;background:#fff;">24</div>
<div class="abs" style="left:1058px;top:469.0px;font:10px/10px 'Liberation Sans',sans-serif;color:#ff0000;white-space:nowrap;letter-spacing:0px;background:#fff;">30</div>
<div class="abs" style="left:1123px;top:469.0px;font:10px/10px 'Liberation Sans',sans-serif;color:#800080;white-space:nowrap;letter-spacing:0px;background:#fff;">39</div>
<div class="abs" style="left:1163px;top:469.0px;font:10px/10px 'Liberation Sans',sans-serif;color:#ff0000;white-space:nowrap;letter-spacing:0px;background:#fff;">45</div>
<div class="abs" style="left:1228px;top:469.0px;font:10px/10px 'Liberation Sans',sans-serif;color:#800080;white-space:nowrap;letter-spacing:0px;background:#fff;">5</div>
<div class="abs" style="right:1167px;top:513.7px;font:10px/10px 'Liberation Mono',monospace;color:#333333;white-space:nowrap;letter-spacing:0px;">2136.9881</div>
<div class="abs" style="right:1167px;top:537.0px;font:10px/10px 'Liberation Mono',monospace;color:#333333;white-space:nowrap;letter-spacing:0px;">561453399</div>
<div class="abs" style="right:1167px;top:553.0px;font:10px/10px 'Liberation Mono',monospace;color:#333333;white-space:nowrap;letter-spacing:0px;">374302266</div>
<div class="abs" style="right:1167px;top:569.0px;font:10px/10px 'Liberation Mono',monospace;color:#333333;white-space:nowrap;letter-spacing:0px;">187151133</div>
<div class="abs" style="left:-1px;top:593.5px;font:11px/11px 'Liberation Sans',sans-serif;color:#0000ff;white-space:nowrap;letter-spacing:0px;letter-spacing:-0.8px">MACD</div>
<div class="abs" style="left:71px;top:593.5px;font:11px/11px 'Liberation Sans',sans-serif;color:#000;white-space:nowrap;letter-spacing:-0.2px;">DIF=42.60</div>
<div class="abs" style="left:142px;top:593.5px;font:11px/11px 'Liberation Sans',sans-serif;color:#0000ff;white-space:nowrap;letter-spacing:-0.15px;">DEA=29.83</div>
<div class="abs" style="left:213px;top:593.5px;font:11px/11px 'Liberation Sans',sans-serif;color:#ff00ff;white-space:nowrap;letter-spacing:-0.15px;">MACD=25.55</div>
<div class="abs" style="right:1167px;top:606.4px;font:10px/10px 'Liberation Mono',monospace;color:#333333;white-space:nowrap;letter-spacing:0px;">145.90</div>
<div class="abs" style="right:1167px;top:624.2px;font:10px/10px 'Liberation Mono',monospace;color:#333333;white-space:nowrap;letter-spacing:0px;">90.43</div>
<div class="abs" style="right:1167px;top:642.5px;font:10px/10px 'Liberation Mono',monospace;color:#333333;white-space:nowrap;letter-spacing:0px;">34.95</div>
<div class="abs" style="right:1167px;top:660.3px;font:10px/10px 'Liberation Mono',monospace;color:#333333;white-space:nowrap;letter-spacing:0px;">-20.53</div>
</body></html>
